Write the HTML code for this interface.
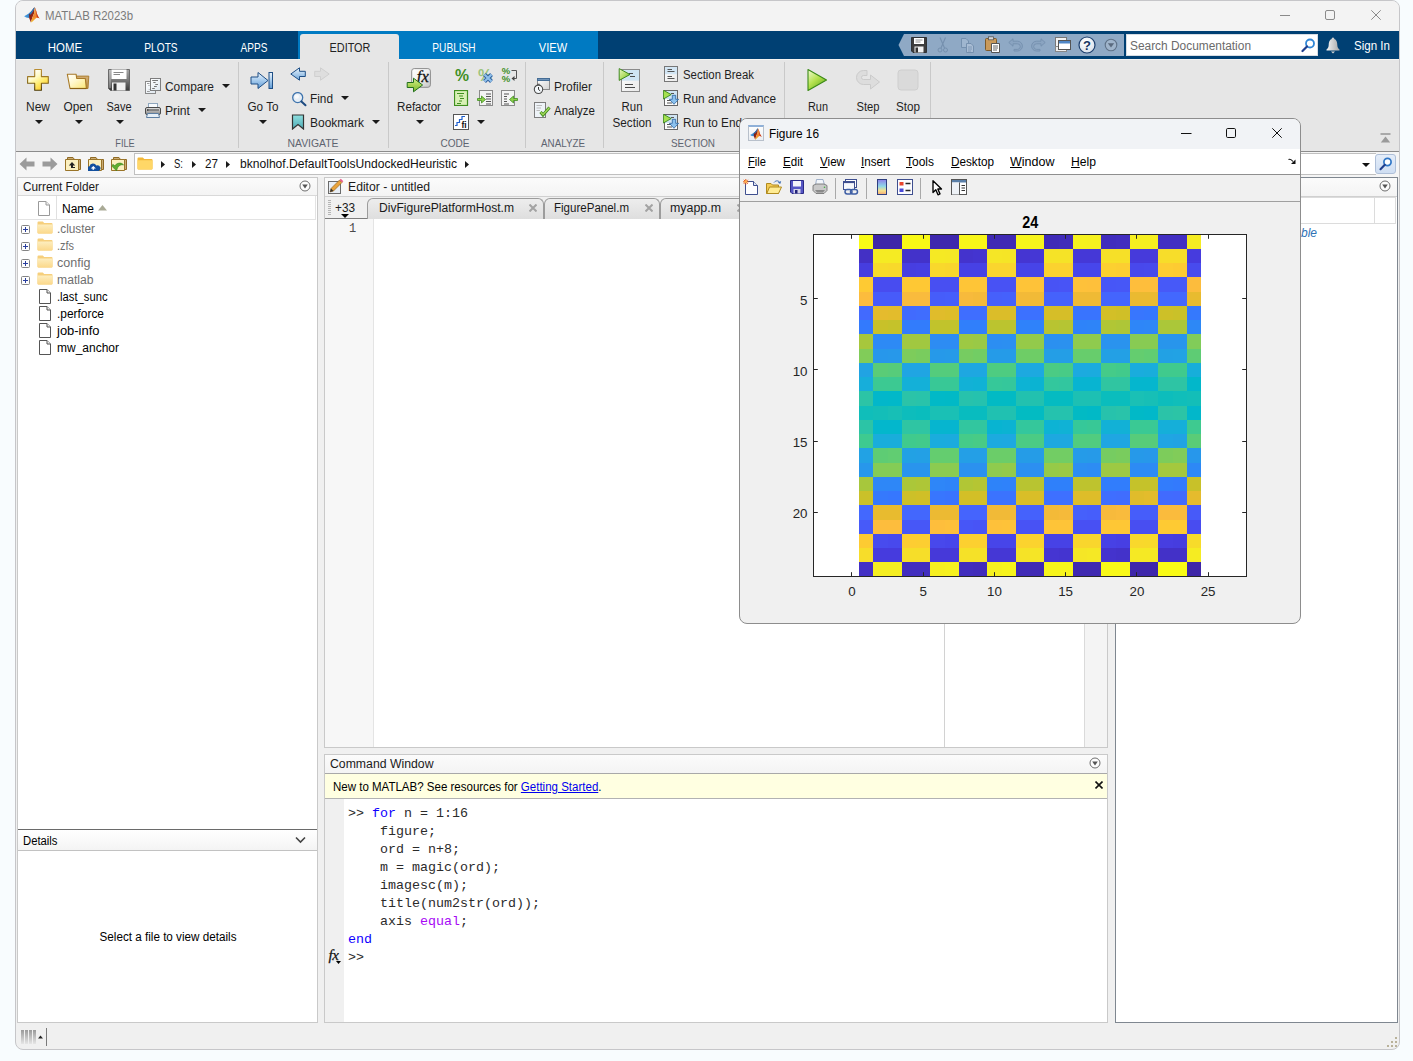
<!DOCTYPE html>
<html><head><meta charset="utf-8"><title>MATLAB R2023b</title>
<style>
html,body{margin:0;padding:0;}
body{width:1413px;height:1061px;overflow:hidden;background:#f8fcfe;font-family:'Liberation Sans', sans-serif;font-size:12px;position:relative;}
div,span,svg{position:absolute;box-sizing:border-box;}
.t{display:block;}
u{text-decoration:underline;text-underline-offset:1px;}
</style></head>
<body>
<div style="left:15px;top:0px;width:1385px;height:1050px;background:#f0f0f0;border:1px solid #c6c6c9;border-radius:8px;"></div>
<div style="left:16px;top:1px;width:1383px;height:30px;background:#f3f3f3;border-radius:7px 7px 0 0;"></div>
<span class="t" id="t0" style="top:7.50px;line-height:16px;font-size:12px;color:#7b7b7b;white-space:pre;left:45px;transform-origin:0 50%;transform:scaleX(0.9514);">MATLAB R2023b</span>
<div style="left:16px;top:31px;width:1383px;height:28px;background:#004073;"></div>
<div style="left:298px;top:31px;width:300px;height:28px;background:#007ac2;"></div>
<div style="left:300px;top:34px;width:99px;height:25px;background:#e6e6e6;border-radius:3px 3px 0 0;"></div>
<span class="t" id="t1" style="top:39.80px;line-height:16px;font-size:12px;color:#fff;white-space:pre;left:64.5px;transform:translateX(-50%) scaleX(0.9528);">HOME</span>
<span class="t" id="t2" style="top:39.80px;line-height:16px;font-size:12px;color:#fff;white-space:pre;left:161px;transform:translateX(-50%) scaleX(0.8461);">PLOTS</span>
<span class="t" id="t3" style="top:39.80px;line-height:16px;font-size:12px;color:#fff;white-space:pre;left:253.5px;transform:translateX(-50%) scaleX(0.8371);">APPS</span>
<span class="t" id="t4" style="top:39.80px;line-height:16px;font-size:12px;color:#222;white-space:pre;left:349.5px;transform:translateX(-50%) scaleX(0.9042);">EDITOR</span>
<span class="t" id="t5" style="top:39.80px;line-height:16px;font-size:12px;color:#fff;white-space:pre;left:454.2px;transform:translateX(-50%) scaleX(0.8431);">PUBLISH</span>
<span class="t" id="t6" style="top:39.80px;line-height:16px;font-size:12px;color:#fff;white-space:pre;left:552.7px;transform:translateX(-50%) scaleX(0.9227);">VIEW</span>
<div style="left:16px;top:59px;width:1383px;height:92px;background:#e6e6e6;"></div>
<div style="left:16px;top:59px;width:1383px;height:1px;background:#f4f2f0;"></div>
<div style="left:300px;top:59px;width:99px;height:1px;background:#e6e6e6;"></div>
<div style="left:16px;top:151px;width:1383px;height:1px;background:#8c8c8c;"></div>
<div style="left:16px;top:152px;width:1383px;height:25px;background:#f5f5f5;"></div>
<div style="left:134px;top:153px;width:1242px;height:22px;background:#fff;border:1px solid #c0c0c0;border-right:none;"></div>
<svg style="left:24px;top:7px;width:16px;height:16px;" viewBox="-0.2 -0.2 16.4 16.4"><defs><linearGradient id="ml24" x1="0" y1="0" x2="1" y2="0"><stop offset="0" stop-color="#4aa3e6"/><stop offset="1" stop-color="#1f5fa8"/></linearGradient><linearGradient id="md24" x1="0" y1="0" x2="1" y2="1"><stop offset="0" stop-color="#5a0f10"/><stop offset="1" stop-color="#c23a1a"/></linearGradient><linearGradient id="mo24" x1="0" y1="0" x2="0" y2="1"><stop offset="0" stop-color="#f2a23a"/><stop offset="0.6" stop-color="#f0832c"/><stop offset="1" stop-color="#f7c62e"/></linearGradient></defs><path d="M-0.1 9.2L5.2 6.2C7.5 4.5 9 1.8 10.5 0L8.5 5.5L5.1 11L2 10.6Z" fill="url(#ml24)"/><path d="M5.1 6.9C7.5 5 9 1.8 10.5 0L10.3 6L8.2 11L6.9 15.8L5.1 11Z" fill="url(#md24)"/><path d="M10.5 0C11.5 1 12.3 4 13.2 7C14 9.3 15 10.8 15.9 11.7C14.3 10.6 13.2 10.6 12.3 11.2C10.5 12.5 8.8 15 6.9 15.8L8.2 11L10.3 6Z" fill="url(#mo24)"/><path d="M10.9 0.4C11.8 1.5 12.4 4 13.2 7C14 9.3 15 10.8 15.9 11.7C14.5 10.7 13.6 10.5 13 10.6C12.6 7 12 3.5 10.9 0.4Z" fill="#c5311d"/><path d="M4.6 6.5C7.2 4.6 8.8 2 10.4 0L10.7 1C9.6 3.2 8.2 5.8 6.6 7.8Z" fill="#2f7fc8" opacity="0.9"/></svg>
<svg style="left:1280px;top:10px;width:10px;height:11px;" viewBox="0 0 10 11"><path d="M0 5.5H10" stroke="#8a8a8a" stroke-width="1"/></svg>
<svg style="left:1325px;top:10px;width:10px;height:10px;" viewBox="0 0 10 10"><rect x="0.5" y="0.5" width="9" height="9" rx="1.5" fill="none" stroke="#8a8a8a"/></svg>
<svg style="left:1371px;top:10px;width:10px;height:10px;" viewBox="0 0 10 10"><path d="M0.3 0.3L9.7 9.7M9.7 0.3L0.3 9.7" stroke="#8a8a8a" stroke-width="1"/></svg>
<svg style="left:898px;top:34px;width:226px;height:22px;" viewBox="0 0 226 22"><path d="M6 0H226V22H6L0.5 11Z" fill="#8fa9c5"/></svg>
<svg style="left:911px;top:37px;width:16px;height:16px;" viewBox="0 0 16 16"><path d="M0.5 0.5H15.5V15.5H2L0.5 14Z" fill="#3c3c3c" stroke="#222" stroke-width="0.8"/><rect x="3" y="1" width="10" height="6" fill="#fff"/><path d="M4.5 3H11.5M4.5 5H9.5" stroke="#777" stroke-width="0.8"/><rect x="3.5" y="9.5" width="9" height="6" fill="#f2f2f2"/><rect x="4.5" y="10.5" width="2.5" height="5" fill="#333"/></svg>
<svg style="left:936px;top:37px;width:14px;height:16px;" viewBox="0 0 14 16"><path d="M9.5 0.5L5 11M4 0.5L8.5 11" stroke="#7590ae" stroke-width="1.1" fill="none"/><circle cx="4" cy="13" r="2" fill="none" stroke="#7590ae"/><circle cx="9.5" cy="13" r="2" fill="none" stroke="#7590ae"/></svg>
<svg style="left:960px;top:37px;width:15px;height:16px;" viewBox="0 0 15 16"><path d="M1.5 1.5H6L8.5 4V10.5H1.5Z" fill="#9fb6cf" stroke="#7590ae"/><path d="M6.5 6.5H11L13.5 9V15.5H6.5Z" fill="#a9bdd4" stroke="#7590ae"/><path d="M8 10H12M8 12H12M8 14H11" stroke="#7590ae" stroke-width="0.8"/></svg>
<svg style="left:985px;top:36px;width:15px;height:17px;" viewBox="0 0 15 17"><rect x="0.5" y="2.5" width="11" height="12" rx="1" fill="#c99a5b" stroke="#7d5a2a"/><rect x="3.5" y="0.8" width="5" height="3" fill="#d9d9d9" stroke="#555" stroke-width="0.8"/><path d="M6.5 7.5H14.5V16.5H6.5Z" fill="#fff" stroke="#555"/><path d="M8 10H13M8 12H13M8 14H12" stroke="#555" stroke-width="0.9"/></svg>
<svg style="left:1008px;top:38px;width:15px;height:14px;" viewBox="0 0 15 14"><path d="M5 0.8L0.8 4.5L5 8.2V5.8H9.5A2.8 2.8 0 0 1 9.5 11.4H6V13H9.5A4.4 4.4 0 0 0 9.5 3.2H5Z" fill="#8aa4c1" stroke="#7590ae" stroke-width="0.9"/></svg>
<svg style="left:1031px;top:38px;width:15px;height:14px;" viewBox="0 0 15 14"><path d="M10 0.8L14.2 4.5L10 8.2V5.8H5.5A2.8 2.8 0 0 0 5.5 11.4H9V13H5.5A4.4 4.4 0 0 1 5.5 3.2H10Z" fill="#8aa4c1" stroke="#7590ae" stroke-width="0.9"/></svg>
<svg style="left:1055px;top:37px;width:16px;height:16px;" viewBox="0 0 16 16"><rect x="0.5" y="0.5" width="11" height="11" fill="#f3f3f3" stroke="#777"/><rect x="0.5" y="9.5" width="11" height="5" fill="#eee" stroke="#888"/><rect x="3.5" y="3.5" width="12" height="9" fill="#fff" stroke="#555"/><rect x="4" y="4" width="11" height="2.5" fill="#4f86c6"/></svg>
<svg style="left:1078px;top:36px;width:18px;height:18px;" viewBox="0 0 18 18"><defs><radialGradient id="gH" cx="0.4" cy="0.3" r="0.8"><stop offset="0" stop-color="#ffffff"/><stop offset="1" stop-color="#d5dde8"/></radialGradient></defs><circle cx="9" cy="9" r="8" fill="url(#gH)" stroke="#1d3f6e" stroke-width="1.2"/><text x="9" y="13.6" font-family="'Liberation Sans',sans-serif" font-weight="bold" font-size="13" text-anchor="middle" fill="#16345f">?</text></svg>
<svg style="left:1104px;top:38px;width:14px;height:14px;" viewBox="0 0 14 14"><circle cx="7" cy="7" r="5.8" fill="#9fb4cb" stroke="#5f7288" stroke-width="1.1"/><path d="M3.8 5.2H10.2L7 9.6Z" fill="#5a6a7e"/></svg>
<div style="left:1126px;top:34px;width:192px;height:22px;background:#fff;border:1px solid #d8dde3;"></div>
<span class="t" id="t7" style="top:37.50px;line-height:16px;font-size:12px;color:#6a6a6a;white-space:pre;left:1130px;transform-origin:0 50%;transform:scaleX(0.9912);">Search Documentation</span>
<svg style="left:1301px;top:38px;width:15px;height:15px;" viewBox="0 0 15 15"><circle cx="9" cy="5.5" r="4" fill="#fff" stroke="#2f86d6" stroke-width="1.8"/><path d="M6 8.5L1.5 13" stroke="#1f3f8f" stroke-width="2.2" stroke-linecap="round"/></svg>
<svg style="left:1326px;top:37px;width:14px;height:17px;" viewBox="0 0 14 17"><defs><linearGradient id="gB" x1="0" y1="0" x2="1" y2="0"><stop offset="0" stop-color="#f4f4f4"/><stop offset="1" stop-color="#a9a9a9"/></linearGradient></defs><path d="M7 0.5C8 0.5 8.3 1.3 8.3 2C10.5 2.8 11.3 5 11.3 8C11.3 10.5 12.3 11.5 13.5 12.5V13.5H0.5V12.5C1.7 11.5 2.7 10.5 2.7 8C2.7 5 3.5 2.8 5.7 2C5.7 1.3 6 0.5 7 0.5Z" fill="url(#gB)"/><path d="M5 14.5H9L7 16.5Z" fill="#d6d6d6"/></svg>
<span class="t" id="t8" style="top:38.00px;line-height:16px;font-size:12px;color:#fff;white-space:pre;left:1354px;transform-origin:0 50%;transform:scaleX(0.9636);">Sign In</span>
<svg style="left:19px;top:157px;width:16px;height:14px;" viewBox="0 0 16 14"><path d="M0.5 7L7.5 0.5V4.5H15.5V9.5H7.5V13.5Z" fill="#9b9b9b"/></svg>
<svg style="left:42px;top:157px;width:16px;height:14px;" viewBox="0 0 16 14"><path d="M15.5 7L8.5 0.5V4.5H0.5V9.5H8.5V13.5Z" fill="#9b9b9b"/></svg>
<svg style="left:65px;top:156px;width:17px;height:15px;" viewBox="0 0 17 15"><path d="M2.5 1.5H8L9.5 3.5H15.5V13.5H2.5Z" fill="#c9ab74" stroke="#8f6a25"/><path d="M0.5 3.5H13.5V14.5H0.5Z" fill="#fbf0c0" stroke="#9a7428"/><path d="M7 6L3.8 9.5H6V12H10V11H8V9.5H10.2Z" fill="#222"/></svg>
<svg style="left:88px;top:156px;width:17px;height:15px;" viewBox="0 0 17 15"><path d="M2.5 1.5H8L9.5 3.5H15.5V13.5H2.5Z" fill="#c9ab74" stroke="#8f6a25"/><path d="M0.5 3.5H13.5V14.5H0.5Z" fill="#fbf0c0" stroke="#9a7428"/><path d="M2 14.8A2.6 2.6 0 0 1 3 10A3.6 3.6 0 0 1 9.8 9.4A2.9 2.9 0 0 1 12.2 14.8Z" fill="#12509f" transform="translate(-1.5,0.2)"/><path d="M6 12.5H4.2L6.8 10L9.4 12.5H7.6V13.8H6Z" fill="#fff" transform="translate(-1.5,0)"/></svg>
<svg style="left:111px;top:156px;width:17px;height:15px;" viewBox="0 0 17 15"><path d="M2.5 1.5H8L9.5 3.5H15.5V13.5H2.5Z" fill="#c9ab74" stroke="#8f6a25"/><path d="M0.5 3.5H13.5V14.5H0.5Z" fill="#fbf0c0" stroke="#9a7428"/><path d="M1 10L5.5 14.5L6.5 11.5C8 9 10 8 12.5 8.5C10.5 6 6 6.2 3.8 9.5L1.8 8Z" fill="#5fae2f" stroke="#2f7f1a" stroke-width="0.6" transform="translate(0,0.3)"/></svg>
<svg style="left:137px;top:157px;width:16px;height:13px;" viewBox="0 0 16 13"><path d="M0.5 1.5Q0.5 0.5 1.5 0.5H5.8L7.3 2H14.5Q15.5 2 15.5 3V11.5Q15.5 12.5 14.5 12.5H1.5Q0.5 12.5 0.5 11.5Z" fill="#f2b83a"/><path d="M0.5 3.3H15.5V11.5Q15.5 12.5 14.5 12.5H1.5Q0.5 12.5 0.5 11.5Z" fill="#ffd767"/></svg>
<svg style="left:161.0px;top:160.5px;width:4px;height:7px;" viewBox="0 0 4 7"><path d="M0 0V7L4 3.5Z" fill="#1a1a1a"/></svg>
<span class="t" id="t9" style="top:156.00px;line-height:16px;font-size:12px;color:#111;white-space:pre;left:174px;transform-origin:0 50%;transform:scaleX(0.7934);">S:</span>
<svg style="left:191.5px;top:160.5px;width:4px;height:7px;" viewBox="0 0 4 7"><path d="M0 0V7L4 3.5Z" fill="#1a1a1a"/></svg>
<span class="t" id="t10" style="top:156.00px;line-height:16px;font-size:12px;color:#111;white-space:pre;left:204.5px;transform-origin:0 50%;transform:scaleX(0.9731);">27</span>
<svg style="left:225.5px;top:160.5px;width:4px;height:7px;" viewBox="0 0 4 7"><path d="M0 0V7L4 3.5Z" fill="#1a1a1a"/></svg>
<span class="t" id="t11" style="top:156.00px;line-height:16px;font-size:12px;color:#111;white-space:pre;left:239.5px;transform-origin:0 50%;transform:scaleX(1.0072);">bknolhof.DefaultToolsUndockedHeuristic</span>
<svg style="left:465.0px;top:160.5px;width:4px;height:7px;" viewBox="0 0 4 7"><path d="M0 0V7L4 3.5Z" fill="#1a1a1a"/></svg>
<svg style="left:1362.0px;top:162.5px;width:8px;height:4px;" viewBox="0 0 8 4"><path d="M0 0H8L4.0 4Z" fill="#111"/></svg>
<div style="left:1375px;top:154px;width:21px;height:20px;background:linear-gradient(#e4edf9,#cfdef2);border:1px solid #aebfd8;border-radius:3px;"></div>
<svg style="left:1379px;top:157px;width:14px;height:14px;" viewBox="0 0 14 14"><circle cx="8.5" cy="5" r="3.6" fill="#fff" stroke="#2f76c6" stroke-width="1.7"/><path d="M5.8 7.8L1.5 12.2" stroke="#1f3f8f" stroke-width="2.1" stroke-linecap="round"/></svg>
<svg style="left:26px;top:68px;width:24px;height:24px;" viewBox="0 0 24 24"><defs><linearGradient id="gNew" x1="0.2" y1="0.1" x2="0.8" y2="1"><stop offset="0" stop-color="#ffffff"/><stop offset="0.3" stop-color="#fffbc8"/><stop offset="0.6" stop-color="#ffec70"/><stop offset="1" stop-color="#ffc61a"/></linearGradient><linearGradient id="gNs" x1="0" y1="0" x2="0" y2="1"><stop offset="0" stop-color="#b98d33"/><stop offset="0.6" stop-color="#8a6a1c"/><stop offset="1" stop-color="#4a390a"/></linearGradient></defs><path d="M8.7 1.5H15.4V8.6H22.3V15.25H15.4V22.2H8.7V15.25H1.6V8.6H8.7Z" fill="url(#gNew)" stroke="url(#gNs)" stroke-width="1.1" stroke-linejoin="round"/></svg>
<span class="t" id="t12" style="top:99.00px;line-height:16px;font-size:12px;color:#1f1f1f;white-space:pre;left:38px;transform:translateX(-50%) scaleX(0.9993);">New</span>
<svg style="left:35.0px;top:120.0px;width:8px;height:4px;" viewBox="0 0 8 4"><path d="M0 0H8L4.0 4Z" fill="#1a1a1a"/></svg>
<svg style="left:66px;top:68px;width:24px;height:24px;" viewBox="0 0 24 24"><defs><linearGradient id="gOp" x1="0" y1="0" x2="0.9" y2="1"><stop offset="0" stop-color="#ffffff"/><stop offset="0.45" stop-color="#fff8cf"/><stop offset="1" stop-color="#fbe77a"/></linearGradient><linearGradient id="gOb" x1="0" y1="0" x2="0" y2="1"><stop offset="0" stop-color="#d2ad74"/><stop offset="1" stop-color="#b98d45"/></linearGradient></defs><path d="M10.1 8.1H22.8L22 20.5H20L19.3 10.5H10.7Z" fill="url(#gOb)" stroke="#a87a28" stroke-width="0.9" stroke-linejoin="round"/><path d="M1.3 6.2H10.1L10.7 10.5H19.3L20.4 20.5H4Z" fill="url(#gOp)" stroke="#a87a28" stroke-width="1.1" stroke-linejoin="round"/><path d="M4 20.5H20.4" stroke="#8a6214" stroke-width="1.2"/></svg>
<span class="t" id="t13" style="top:99.00px;line-height:16px;font-size:12px;color:#1f1f1f;white-space:pre;left:78px;transform:translateX(-50%) scaleX(0.9878);">Open</span>
<svg style="left:75.0px;top:120.0px;width:8px;height:4px;" viewBox="0 0 8 4"><path d="M0 0H8L4.0 4Z" fill="#1a1a1a"/></svg>
<svg style="left:107px;top:68px;width:24px;height:24px;" viewBox="0 0 24 24"><defs><linearGradient id="gSv" x1="0" y1="0" x2="0" y2="1"><stop offset="0" stop-color="#a6a6a6"/><stop offset="0.5" stop-color="#7a7a7a"/><stop offset="1" stop-color="#3a3a3a"/></linearGradient></defs><path d="M1.5 1.5H22.5V22.5H3.5L1.5 20.5Z" fill="url(#gSv)" stroke="#555" stroke-width="0.8"/><rect x="2" y="2" width="2" height="18" fill="#fff" opacity="0.25"/><rect x="4.5" y="1.5" width="15" height="9.5" fill="#fff"/><path d="M6.5 4.5H16.5M6.5 6.5H13" stroke="#888" stroke-width="1"/><rect x="5" y="14.5" width="13.5" height="8" fill="#f1f1f1"/><rect x="6.5" y="15.5" width="3" height="7" fill="#333"/></svg>
<span class="t" id="t14" style="top:99.00px;line-height:16px;font-size:12px;color:#1f1f1f;white-space:pre;left:119px;transform:translateX(-50%) scaleX(0.9138);">Save</span>
<svg style="left:116.0px;top:120.0px;width:8px;height:4px;" viewBox="0 0 8 4"><path d="M0 0H8L4.0 4Z" fill="#1a1a1a"/></svg>
<svg style="left:145px;top:78px;width:16px;height:16px;" viewBox="0 0 16 16"><defs><linearGradient id="gCp" x1="0" y1="0" x2="1" y2="1"><stop offset="0" stop-color="#ffffff"/><stop offset="1" stop-color="#dfe8f0"/></linearGradient></defs><rect x="0.5" y="3.5" width="10" height="12" fill="url(#gCp)" stroke="#8a8a8a"/><path d="M2 5.5H4.5M3.5 7.5H4.5M3.8 11.5H4.5M2 13.5H4.8" stroke="#9a9a9a"/><rect x="5.5" y="0.5" width="10" height="12" fill="url(#gCp)" stroke="#7d7d7d"/><path d="M7.2 2.5H13M8.3 4.5H10.6M10.3 6.5H13M9 8.5H11.8M7.2 10.5H9.8" stroke="#777"/></svg>
<span class="t" id="t15" style="top:79.00px;line-height:16px;font-size:12px;color:#1f1f1f;white-space:pre;left:165px;transform-origin:0 50%;transform:scaleX(0.9927);">Compare</span>
<svg style="left:222.0px;top:84.0px;width:8px;height:4px;" viewBox="0 0 8 4"><path d="M0 0H8L4.0 4Z" fill="#1a1a1a"/></svg>
<svg style="left:145px;top:102px;width:16px;height:16px;" viewBox="0 0 16 16"><defs><linearGradient id="gPr" x1="0" y1="0" x2="0" y2="1"><stop offset="0" stop-color="#e2e2e2"/><stop offset="0.5" stop-color="#b4b4b4"/><stop offset="1" stop-color="#8a8a8a"/></linearGradient></defs><rect x="3.5" y="1.5" width="9" height="5" fill="#f7fafd" stroke="#8fa6bd"/><rect x="0.5" y="5.5" width="15" height="7" rx="1.5" fill="url(#gPr)" stroke="#4a4a4a"/><rect x="2" y="7.2" width="12" height="1.6" fill="#777"/><circle cx="2.8" cy="8" r="0.7" fill="#222"/><path d="M2.5 11.5H13.5L14.5 15.5H1.5Z" fill="#e6eff7" stroke="#5d7fa3"/></svg>
<span class="t" id="t16" style="top:102.50px;line-height:16px;font-size:12px;color:#1f1f1f;white-space:pre;left:165px;transform-origin:0 50%;transform:scaleX(1.0127);">Print</span>
<svg style="left:198.0px;top:108.0px;width:8px;height:4px;" viewBox="0 0 8 4"><path d="M0 0H8L4.0 4Z" fill="#1a1a1a"/></svg>
<span class="t" id="t17" style="top:135.30px;line-height:16px;font-size:11.5px;color:#5e6470;white-space:pre;left:125px;transform:translateX(-50%) scaleX(0.8026);">FILE</span>
<div style="left:238px;top:62px;width:1px;height:86px;background:#c9c9c9;"></div>
<svg style="left:250px;top:70px;width:24px;height:20px;" viewBox="0 0 24 20"><defs><linearGradient id="gGo" x1="0" y1="0" x2="0" y2="1"><stop offset="0" stop-color="#eef6fd"/><stop offset="0.5" stop-color="#a6cbed"/><stop offset="1" stop-color="#5f9ad4"/></linearGradient></defs><path d="M1 7H8V2.5L18 10.5L8 18.5V14H1Z" fill="url(#gGo)" stroke="#1f4f86" stroke-width="1"/><rect x="19" y="2.5" width="3.5" height="16" fill="url(#gGo)" stroke="#1f4f86" stroke-width="1"/></svg>
<span class="t" id="t18" style="top:99.00px;line-height:16px;font-size:12px;color:#1f1f1f;white-space:pre;left:262.5px;transform:translateX(-50%) scaleX(0.9745);">Go To</span>
<svg style="left:259.0px;top:120.0px;width:8px;height:4px;" viewBox="0 0 8 4"><path d="M0 0H8L4.0 4Z" fill="#1a1a1a"/></svg>
<svg style="left:290px;top:67px;width:16px;height:14px;" viewBox="0 0 16 14"><defs><linearGradient id="gBk" x1="0" y1="0" x2="0" y2="1"><stop offset="0" stop-color="#eaf4fc"/><stop offset="1" stop-color="#6ea6da"/></linearGradient></defs><path d="M0.8 7L9.5 0.8V4.3H15.3V9.5H9.5V13.2Z" fill="url(#gBk)" stroke="#1f4f86" stroke-width="1"/></svg>
<svg style="left:314px;top:67px;width:16px;height:14px;" viewBox="0 0 16 14"><path d="M15.2 7L6.5 0.8V4.3H0.7V9.5H6.5V13.2Z" fill="#dedede" stroke="#cfcfcf" stroke-width="1"/></svg>
<svg style="left:291px;top:92px;width:16px;height:15px;" viewBox="0 0 16 15"><circle cx="6.7" cy="5.6" r="5" fill="#e6eef6" stroke="#3f74ad" stroke-width="1.3"/><circle cx="5.8" cy="4.6" r="2.2" fill="#fff" opacity="0.7"/><path d="M10.4 9.4L14.5 13.2" stroke="#1c4a80" stroke-width="2" stroke-linecap="round"/></svg>
<span class="t" id="t19" style="top:90.50px;line-height:16px;font-size:12px;color:#1f1f1f;white-space:pre;left:310px;transform-origin:0 50%;transform:scaleX(0.9853);">Find</span>
<svg style="left:341.0px;top:96.0px;width:8px;height:4px;" viewBox="0 0 8 4"><path d="M0 0H8L4.0 4Z" fill="#1a1a1a"/></svg>
<svg style="left:291px;top:114px;width:14px;height:16px;" viewBox="0 0 14 16"><defs><linearGradient id="gBm" x1="0" y1="0" x2="0" y2="1"><stop offset="0" stop-color="#8fe0e0"/><stop offset="1" stop-color="#4faab4"/></linearGradient></defs><path d="M1.5 1H12.5V15L7 10.5L1.5 15Z" fill="url(#gBm)" stroke="#333" stroke-width="1.2"/></svg>
<span class="t" id="t20" style="top:115.00px;line-height:16px;font-size:12px;color:#1f1f1f;white-space:pre;left:310px;transform-origin:0 50%;transform:scaleX(0.9994);">Bookmark</span>
<svg style="left:372.0px;top:120.0px;width:8px;height:4px;" viewBox="0 0 8 4"><path d="M0 0H8L4.0 4Z" fill="#1a1a1a"/></svg>
<span class="t" id="t21" style="top:135.30px;line-height:16px;font-size:11.5px;color:#5e6470;white-space:pre;left:312.5px;transform:translateX(-50%) scaleX(0.9034);">NAVIGATE</span>
<div style="left:388px;top:62px;width:1px;height:86px;background:#c9c9c9;"></div>
<svg style="left:406px;top:67px;width:26px;height:26px;" viewBox="0 0 26 26"><defs><linearGradient id="gRf" x1="0" y1="0" x2="1" y2="1"><stop offset="0" stop-color="#ffffff"/><stop offset="0.5" stop-color="#f0f0f0"/><stop offset="1" stop-color="#c4c4c4"/></linearGradient><linearGradient id="gGr" x1="0" y1="0" x2="0" y2="1"><stop offset="0" stop-color="#d6ef90"/><stop offset="0.5" stop-color="#a9d556"/><stop offset="1" stop-color="#79b431"/></linearGradient></defs><rect x="5.7" y="1.6" width="18.7" height="18.7" rx="2.5" fill="url(#gRf)" stroke="#8c8c8c"/><text x="16.8" y="15.2" font-family="'Liberation Serif',serif" font-style="italic" font-size="16.5" text-anchor="middle" fill="#111" stroke="#111" stroke-width="0.3">fx</text><path d="M1.2 15.5H7.5V11.2L16.6 18L7.5 24.8V20.5H1.2Z" fill="url(#gGr)" stroke="#22701c" stroke-width="1" stroke-linejoin="round"/></svg>
<span class="t" id="t22" style="top:99.00px;line-height:16px;font-size:12px;color:#1f1f1f;white-space:pre;left:419px;transform:translateX(-50%) scaleX(0.9700);">Refactor</span>
<svg style="left:416.0px;top:120.0px;width:8px;height:4px;" viewBox="0 0 8 4"><path d="M0 0H8L4.0 4Z" fill="#1a1a1a"/></svg>
<svg style="left:454px;top:67px;width:16px;height:16px;" viewBox="0 0 16 16"><text x="8" y="13.6" font-family="'Liberation Sans',sans-serif" font-weight="bold" font-size="17" textLength="14" lengthAdjust="spacingAndGlyphs" text-anchor="middle" fill="#3f8f1f">%</text></svg>
<svg style="left:477px;top:67px;width:16px;height:16px;" viewBox="0 0 16 16"><text x="8" y="13.6" font-family="'Liberation Sans',sans-serif" font-weight="bold" font-size="17" textLength="14" lengthAdjust="spacingAndGlyphs" text-anchor="middle" fill="#9cc47c">%</text><path d="M7.5 7.5L14.5 14.5M14.5 7.5L7.5 14.5" stroke="#2f5f9f" stroke-width="4"/><path d="M7.5 7.5L14.5 14.5M14.5 7.5L7.5 14.5" stroke="#8fc0ea" stroke-width="2.2"/></svg>
<svg style="left:501px;top:67px;width:17px;height:16px;" viewBox="0 0 17 16"><text x="5" y="7.2" font-family="'Liberation Sans',sans-serif" font-weight="bold" font-size="9.5" text-anchor="middle" fill="#3f8f1f">%</text><text x="5" y="14.8" font-family="'Liberation Sans',sans-serif" font-weight="bold" font-size="9.5" text-anchor="middle" fill="#3f8f1f">%</text><path d="M10.5 3.5H15.5V11.5H12" stroke="#555" fill="none"/><path d="M13.5 9L10.5 11.5L13.5 14Z" fill="#444"/></svg>
<svg style="left:454px;top:90px;width:15px;height:16px;" viewBox="0 0 15 16"><rect x="0.5" y="0.5" width="13" height="15" fill="#d9f0b6" stroke="#3f8f1f" stroke-width="1.2"/><path d="M3 3.5H10M5 6H9M6 8.5H10M5 11H8M3 13.5H7" stroke="#3f8f1f"/></svg>
<svg style="left:477px;top:90px;width:16px;height:16px;" viewBox="0 0 16 16"><rect x="2.5" y="0.5" width="13" height="15" fill="#f4f4f4" stroke="#8a8a8a"/><path d="M9 4H14M9 6.5H14M9 9H14M9 11.5H14M9 14H14" stroke="#555"/><path d="M0.5 8.5H4.5V6L8.5 9.5L4.5 13V10.5H0.5Z" fill="#8fd04a" stroke="#3f8f1f" stroke-width="0.8"/></svg>
<svg style="left:501px;top:90px;width:17px;height:16px;" viewBox="0 0 17 16"><rect x="0.5" y="0.5" width="13" height="15" fill="#f4f4f4" stroke="#8a8a8a"/><path d="M3 4H8M3 6.5H6M3 9H6M3 11.5H6M3 14H8" stroke="#555"/><path d="M16.5 8.5H12.5V6L8.5 9.5L12.5 13V10.5H16.5Z" fill="#8fd04a" stroke="#3f8f1f" stroke-width="0.8"/></svg>
<svg style="left:453px;top:114px;width:16px;height:16px;" viewBox="0 0 16 16"><rect x="0.5" y="0.5" width="15" height="15" fill="#fff" stroke="#555"/><path d="M2 11.5H4V8.5H6.5V5.5H9V2.5H12" stroke="#1f5fcf" stroke-width="1.2" fill="none"/><text x="11" y="14" font-family="'Liberation Sans',sans-serif" font-weight="bold" font-size="8.5" text-anchor="middle" fill="#111">fi</text></svg>
<svg style="left:477.0px;top:120.0px;width:8px;height:4px;" viewBox="0 0 8 4"><path d="M0 0H8L4.0 4Z" fill="#1a1a1a"/></svg>
<span class="t" id="t23" style="top:135.30px;line-height:16px;font-size:11.5px;color:#5e6470;white-space:pre;left:455px;transform:translateX(-50%) scaleX(0.8726);">CODE</span>
<div style="left:525px;top:62px;width:1px;height:86px;background:#c9c9c9;"></div>
<svg style="left:533px;top:77px;width:17px;height:18px;" viewBox="0 0 17 18"><defs><linearGradient id="gWn" x1="0" y1="0" x2="1" y2="1"><stop offset="0" stop-color="#ffffff"/><stop offset="1" stop-color="#d2d2d2"/></linearGradient></defs><rect x="4.5" y="1.5" width="12" height="11" fill="url(#gWn)" stroke="#8a8a8a"/><rect x="4.5" y="1.5" width="12" height="2" fill="#6f93b8" stroke="#456d95"/><circle cx="5.5" cy="12.3" r="4.2" fill="#f4f8fb" stroke="#4a4a4a" stroke-width="1.1"/><path d="M5.5 10V12.5L7.2 13.8" stroke="#333" fill="none"/><path d="M4.3 7.2H6.7M2 9L2.8 9.8" stroke="#4a4a4a" stroke-width="1.1"/></svg>
<span class="t" id="t24" style="top:79.00px;line-height:16px;font-size:12px;color:#1f1f1f;white-space:pre;left:554px;transform-origin:0 50%;transform:scaleX(0.9996);">Profiler</span>
<svg style="left:534px;top:102px;width:17px;height:16px;" viewBox="0 0 17 16"><rect x="0.5" y="0.5" width="11" height="15" fill="#eef3f8" stroke="#7d7d7d"/><path d="M2.5 3.5H8M2.5 6H7M2.5 8.5H6" stroke="#bbb"/><path d="M6.5 10L9 13L15.5 5.5" stroke="#3d8a1c" stroke-width="3" fill="none"/><path d="M6.7 10.2L9 12.8L15.3 5.7" stroke="#a4d95a" stroke-width="1.3" fill="none"/></svg>
<span class="t" id="t25" style="top:102.80px;line-height:16px;font-size:12px;color:#1f1f1f;white-space:pre;left:554px;transform-origin:0 50%;transform:scaleX(0.9601);">Analyze</span>
<span class="t" id="t26" style="top:135.30px;line-height:16px;font-size:11.5px;color:#5e6470;white-space:pre;left:563px;transform:translateX(-50%) scaleX(0.8533);">ANALYZE</span>
<div style="left:603px;top:62px;width:1px;height:86px;background:#c9c9c9;"></div>
<svg style="left:618px;top:68px;width:24px;height:25px;" viewBox="0 0 24 25"><defs><linearGradient id="gTr" x1="0" y1="0" x2="1" y2="1"><stop offset="0" stop-color="#eaf8c4"/><stop offset="0.5" stop-color="#b4df6a"/><stop offset="1" stop-color="#5fae1f"/></linearGradient><linearGradient id="gPg" x1="0" y1="0" x2="1" y2="1"><stop offset="0" stop-color="#ffffff"/><stop offset="1" stop-color="#e9e9e9"/></linearGradient></defs><rect x="3.5" y="1.5" width="18" height="22" fill="url(#gPg)" stroke="#8a8a8a"/><rect x="4" y="2" width="17" height="10.7" fill="#cfe4f3"/><path d="M11 5.5H15M12 8.5H17M7 16.5H15M7 19.5H17" stroke="#4a4a4a"/><path d="M1.2 0.6V12.4L12 6.5Z" fill="url(#gTr)" stroke="#2f7f12" stroke-width="0.9" stroke-linejoin="round"/></svg>
<span class="t" id="t27" style="top:99.00px;line-height:16px;font-size:12px;color:#1f1f1f;white-space:pre;left:631.5px;transform:translateX(-50%) scaleX(0.9539);">Run</span>
<span class="t" id="t28" style="top:115.00px;line-height:16px;font-size:12px;color:#1f1f1f;white-space:pre;left:631.5px;transform:translateX(-50%) scaleX(0.9742);">Section</span>
<svg style="left:663px;top:66px;width:16px;height:16px;" viewBox="0 0 16 16"><rect x="1.5" y="0.5" width="13" height="15" fill="url(#gPg)" stroke="#777"/><rect x="2" y="1" width="12" height="7.2" fill="#d3e6f4"/><path d="M4.5 3.5H9M4.5 5.5H11.5M4.5 10.5H9M4.5 12.5H11.5" stroke="#555"/></svg>
<span class="t" id="t29" style="top:67.00px;line-height:16px;font-size:12px;color:#1f1f1f;white-space:pre;left:683px;transform-origin:0 50%;transform:scaleX(0.9502);">Section Break</span>
<svg style="left:663px;top:90px;width:17px;height:16px;" viewBox="0 0 17 16"><rect x="1.5" y="0.5" width="13" height="15" fill="#fdfdfd" stroke="#666"/><rect x="2" y="1" width="12" height="8" fill="#cfe4f3"/><path d="M8 3.5H11M4 10.5H8M4 13H9" stroke="#555"/><path d="M0.4 0.2V9L8.2 4.6Z" fill="#a5e050" stroke="#2a7a10" stroke-width="0.8" stroke-linejoin="round"/><path d="M9.3 5.3H12.7V9.3H15.6L11 14.3L6.4 9.3H9.3Z" fill="#8cc2ee" stroke="#2a62a0" stroke-width="0.8" stroke-linejoin="round"/></svg>
<span class="t" id="t30" style="top:91.00px;line-height:16px;font-size:12px;color:#1f1f1f;white-space:pre;left:683px;transform-origin:0 50%;transform:scaleX(0.9815);">Run and Advance</span>
<svg style="left:663px;top:114px;width:17px;height:16px;" viewBox="0 0 17 16"><rect x="1.5" y="0.5" width="13" height="15" fill="#fdfdfd" stroke="#666"/><rect x="2" y="1" width="12" height="8" fill="#cfe4f3"/><path d="M8 3.5H11M4 10.5H8M4 13H9" stroke="#555"/><path d="M0.4 0.2V9L8.2 4.6Z" fill="#a5e050" stroke="#2a7a10" stroke-width="0.8" stroke-linejoin="round"/><path d="M9.3 5.3H12.7V9.3H15.6L11 14.3L6.4 9.3H9.3Z" fill="#8cc2ee" stroke="#2a62a0" stroke-width="0.8" stroke-linejoin="round"/></svg>
<span class="t" id="t31" style="top:115.00px;line-height:16px;font-size:12px;color:#1f1f1f;white-space:pre;left:683px;transform-origin:0 50%;transform:scaleX(0.9826);">Run to End</span>
<span class="t" id="t32" style="top:135.30px;line-height:16px;font-size:11.5px;color:#5e6470;white-space:pre;left:692.5px;transform:translateX(-50%) scaleX(0.8606);">SECTION</span>
<div style="left:784px;top:62px;width:1px;height:86px;background:#c9c9c9;"></div>
<svg style="left:806px;top:68px;width:24px;height:24px;" viewBox="0 0 24 24"><defs><linearGradient id="gRn" x1="0" y1="0" x2="0.8" y2="1"><stop offset="0" stop-color="#f2fbd8"/><stop offset="0.5" stop-color="#b5e24f"/><stop offset="1" stop-color="#5ea81c"/></linearGradient></defs><path d="M2 1.5V22.5L20.5 12Z" fill="url(#gRn)" stroke="#3b8a16" stroke-width="1.1" stroke-linejoin="round"/></svg>
<span class="t" id="t33" style="top:99.00px;line-height:16px;font-size:12px;color:#1f1f1f;white-space:pre;left:817.5px;transform:translateX(-50%) scaleX(0.9084);">Run</span>
<svg style="left:855px;top:69px;width:26px;height:22px;" viewBox="0 0 26 22"><path d="M12 1.5H8.5A7 7 0 0 0 8.5 15.5H15.5V20L24.5 13L15.5 6V10.5H8.5A2 2 0 0 1 8.5 6.5H12Z" fill="#dddddd" stroke="#cbcbcb" stroke-width="1" stroke-linejoin="round"/></svg>
<span class="t" id="t34" style="top:99.00px;line-height:16px;font-size:12px;color:#1f1f1f;white-space:pre;left:867.5px;transform:translateX(-50%) scaleX(0.9316);">Step</span>
<svg style="left:897px;top:69px;width:22px;height:22px;" viewBox="0 0 22 22"><rect x="1" y="1" width="20" height="20" rx="3" fill="#dadada" stroke="#cecece"/></svg>
<span class="t" id="t35" style="top:99.00px;line-height:16px;font-size:12px;color:#1f1f1f;white-space:pre;left:908px;transform:translateX(-50%) scaleX(0.9722);">Stop</span>
<div style="left:930px;top:62px;width:1px;height:86px;background:#c9c9c9;"></div>
<svg style="left:1380px;top:133px;width:11px;height:10px;" viewBox="0 0 11 10"><path d="M0.5 1H10.5" stroke="#9a9a9a" stroke-width="1.6"/><path d="M0.8 9.5H10.2L5.5 3.5Z" fill="#9a9a9a"/></svg>
<div style="left:17px;top:177px;width:301px;height:846px;background:#fff;border:1px solid #c9c9c9;"></div>
<div style="left:18px;top:178px;width:299px;height:18px;background:linear-gradient(#fbfbfb,#f4f4f4);border-bottom:1px solid #d9d9d9;"></div>
<span class="t" id="t36" style="top:178.70px;line-height:16px;font-size:12px;color:#1a1a1a;white-space:pre;left:23px;transform-origin:0 50%;transform:scaleX(0.9822);">Current Folder</span>
<svg style="left:299px;top:179.7px;width:12px;height:12px;" viewBox="0 0 12 12"><circle cx="6" cy="6" r="5" fill="#fdfdfd" stroke="#6e6e6e" stroke-width="1"/><path d="M3.2 4.6H8.8L6 8.4Z" fill="#555"/></svg>
<div style="left:18px;top:196px;width:298px;height:24px;background:#fff;border-bottom:1px solid #e3e3e3;border-right:1px solid #e3e3e3;"></div>
<div style="left:56px;top:196px;width:1px;height:23px;background:#e0e0e0;"></div>
<svg style="left:38px;top:201px;width:12px;height:15px;" viewBox="0 0 12 15"><path d="M0.5 0.5H8L11.5 4V14.5H0.5Z" fill="#fff" stroke="#9a9a9a" stroke-width="1"/><path d="M8 0.5V4H11.5" fill="#f0f0f0" stroke="#9a9a9a" stroke-width="1"/></svg>
<span class="t" id="t37" style="top:200.50px;line-height:16px;font-size:12px;color:#000;white-space:pre;left:62px;">Name</span>
<svg style="left:98px;top:205px;width:9px;height:6px;" viewBox="0 0 9 6"><path d="M0 5.5H9L4.5 0Z" fill="#a9aa96"/></svg>
<svg style="left:21.0px;top:225.0px;width:9px;height:9px;" viewBox="0 0 9 9"><rect x="0.5" y="0.5" width="8" height="8" rx="1" fill="#fdfdfd" stroke="#848484"/><path d="M2 4.5H7M4.5 2V7" stroke="#2a3f9e" stroke-width="1"/></svg>
<svg style="left:37px;top:221px;width:16px;height:13px;" viewBox="0 0 16 13"><defs><linearGradient id="fg37221" x1="0" y1="0" x2="0" y2="1"><stop offset="0" stop-color="#fdeec0"/><stop offset="1" stop-color="#fbd88a"/></linearGradient></defs><path d="M0.5 1.5Q0.5 0.5 1.5 0.5H5.8L7.2 2H14.5Q15.5 2 15.5 3V11.5Q15.5 12.5 14.5 12.5H1.5Q0.5 12.5 0.5 11.5Z" fill="#f6cf7c"/><path d="M0.5 3.4H15.5V11.5Q15.5 12.5 14.5 12.5H1.5Q0.5 12.5 0.5 11.5Z" fill="url(#fg37221)"/></svg>
<span class="t" id="t38" style="top:221.00px;line-height:16px;font-size:12px;color:#6f6f6f;white-space:pre;left:57px;transform-origin:0 50%;transform:scaleX(0.9822);">.cluster</span>
<svg style="left:21.0px;top:242.0px;width:9px;height:9px;" viewBox="0 0 9 9"><rect x="0.5" y="0.5" width="8" height="8" rx="1" fill="#fdfdfd" stroke="#848484"/><path d="M2 4.5H7M4.5 2V7" stroke="#2a3f9e" stroke-width="1"/></svg>
<svg style="left:37px;top:238px;width:16px;height:13px;" viewBox="0 0 16 13"><defs><linearGradient id="fg37238" x1="0" y1="0" x2="0" y2="1"><stop offset="0" stop-color="#fdeec0"/><stop offset="1" stop-color="#fbd88a"/></linearGradient></defs><path d="M0.5 1.5Q0.5 0.5 1.5 0.5H5.8L7.2 2H14.5Q15.5 2 15.5 3V11.5Q15.5 12.5 14.5 12.5H1.5Q0.5 12.5 0.5 11.5Z" fill="#f6cf7c"/><path d="M0.5 3.4H15.5V11.5Q15.5 12.5 14.5 12.5H1.5Q0.5 12.5 0.5 11.5Z" fill="url(#fg37238)"/></svg>
<span class="t" id="t39" style="top:238.00px;line-height:16px;font-size:12px;color:#6f6f6f;white-space:pre;left:57px;transform-origin:0 50%;transform:scaleX(0.9105);">.zfs</span>
<svg style="left:21.0px;top:259.0px;width:9px;height:9px;" viewBox="0 0 9 9"><rect x="0.5" y="0.5" width="8" height="8" rx="1" fill="#fdfdfd" stroke="#848484"/><path d="M2 4.5H7M4.5 2V7" stroke="#2a3f9e" stroke-width="1"/></svg>
<svg style="left:37px;top:255px;width:16px;height:13px;" viewBox="0 0 16 13"><defs><linearGradient id="fg37255" x1="0" y1="0" x2="0" y2="1"><stop offset="0" stop-color="#fdeec0"/><stop offset="1" stop-color="#fbd88a"/></linearGradient></defs><path d="M0.5 1.5Q0.5 0.5 1.5 0.5H5.8L7.2 2H14.5Q15.5 2 15.5 3V11.5Q15.5 12.5 14.5 12.5H1.5Q0.5 12.5 0.5 11.5Z" fill="#f6cf7c"/><path d="M0.5 3.4H15.5V11.5Q15.5 12.5 14.5 12.5H1.5Q0.5 12.5 0.5 11.5Z" fill="url(#fg37255)"/></svg>
<span class="t" id="t40" style="top:255.00px;line-height:16px;font-size:12px;color:#6f6f6f;white-space:pre;left:57px;transform-origin:0 50%;transform:scaleX(1.0459);">config</span>
<svg style="left:21.0px;top:276.0px;width:9px;height:9px;" viewBox="0 0 9 9"><rect x="0.5" y="0.5" width="8" height="8" rx="1" fill="#fdfdfd" stroke="#848484"/><path d="M2 4.5H7M4.5 2V7" stroke="#2a3f9e" stroke-width="1"/></svg>
<svg style="left:37px;top:272px;width:16px;height:13px;" viewBox="0 0 16 13"><defs><linearGradient id="fg37272" x1="0" y1="0" x2="0" y2="1"><stop offset="0" stop-color="#fdeec0"/><stop offset="1" stop-color="#fbd88a"/></linearGradient></defs><path d="M0.5 1.5Q0.5 0.5 1.5 0.5H5.8L7.2 2H14.5Q15.5 2 15.5 3V11.5Q15.5 12.5 14.5 12.5H1.5Q0.5 12.5 0.5 11.5Z" fill="#f6cf7c"/><path d="M0.5 3.4H15.5V11.5Q15.5 12.5 14.5 12.5H1.5Q0.5 12.5 0.5 11.5Z" fill="url(#fg37272)"/></svg>
<span class="t" id="t41" style="top:272.00px;line-height:16px;font-size:12px;color:#6f6f6f;white-space:pre;left:57px;transform-origin:0 50%;transform:scaleX(1.0130);">matlab</span>
<svg style="left:39px;top:289px;width:12px;height:15px;" viewBox="0 0 12 15"><path d="M0.5 0.5H8L11.5 4V14.5H0.5Z" fill="#fff" stroke="#555" stroke-width="1"/><path d="M8 0.5V4H11.5" fill="#f0f0f0" stroke="#555" stroke-width="1"/></svg>
<span class="t" id="t42" style="top:289.00px;line-height:16px;font-size:12px;color:#000;white-space:pre;left:57px;transform-origin:0 50%;transform:scaleX(0.9346);">.last_sunc</span>
<svg style="left:39px;top:306px;width:12px;height:15px;" viewBox="0 0 12 15"><path d="M0.5 0.5H8L11.5 4V14.5H0.5Z" fill="#fff" stroke="#555" stroke-width="1"/><path d="M8 0.5V4H11.5" fill="#f0f0f0" stroke="#555" stroke-width="1"/></svg>
<span class="t" id="t43" style="top:306.00px;line-height:16px;font-size:12px;color:#000;white-space:pre;left:57px;transform-origin:0 50%;transform:scaleX(0.9924);">.perforce</span>
<svg style="left:39px;top:323px;width:12px;height:15px;" viewBox="0 0 12 15"><path d="M0.5 0.5H8L11.5 4V14.5H0.5Z" fill="#fff" stroke="#555" stroke-width="1"/><path d="M8 0.5V4H11.5" fill="#f0f0f0" stroke="#555" stroke-width="1"/></svg>
<span class="t" id="t44" style="top:323.00px;line-height:16px;font-size:12px;color:#000;white-space:pre;left:57px;transform-origin:0 50%;transform:scaleX(1.0798);">job-info</span>
<svg style="left:39px;top:340px;width:12px;height:15px;" viewBox="0 0 12 15"><path d="M0.5 0.5H8L11.5 4V14.5H0.5Z" fill="#fff" stroke="#555" stroke-width="1"/><path d="M8 0.5V4H11.5" fill="#f0f0f0" stroke="#555" stroke-width="1"/></svg>
<span class="t" id="t45" style="top:340.00px;line-height:16px;font-size:12px;color:#000;white-space:pre;left:57px;transform-origin:0 50%;transform:scaleX(0.9995);">mw_anchor</span>
<div style="left:18px;top:829px;width:299px;height:1px;background:#6a6a6a;"></div>
<div style="left:18px;top:830px;width:299px;height:21px;background:linear-gradient(#ffffff,#f4f4f4);border-bottom:1px solid #c2c2c2;"></div>
<span class="t" id="t46" style="top:832.50px;line-height:16px;font-size:12px;color:#000;white-space:pre;left:22.5px;transform-origin:0 50%;transform:scaleX(0.9404);">Details</span>
<svg style="left:295px;top:836px;width:11px;height:8px;" viewBox="0 0 11 8"><path d="M1 1.5L5.5 6L10 1.5" stroke="#444" stroke-width="1.6" fill="none"/></svg>
<span class="t" id="t47" style="top:929.00px;line-height:16px;font-size:12px;color:#000;white-space:pre;left:167.5px;transform:translateX(-50%) scaleX(0.9734);">Select a file to view details</span>
<div style="left:324px;top:177px;width:784px;height:571px;background:#fff;border:1px solid #c9c9c9;"></div>
<div style="left:325px;top:178px;width:782px;height:19px;background:linear-gradient(#fbfbfb,#f4f4f4);border-bottom:1px solid #d0d0d0;"></div>
<span class="t" id="t48" style="top:178.70px;line-height:16px;font-size:12px;color:#1a1a1a;white-space:pre;left:348px;transform-origin:0 50%;transform:scaleX(1.0159);">Editor - untitled</span>
<svg style="left:326.5px;top:177.5px;width:17px;height:17px;" viewBox="0 0 17 17"><rect x="1.5" y="3.5" width="12" height="12" fill="#e8eef5" stroke="#6b6b6b"/><path d="M3 14L4 10.5L12.5 2L15 4.5L6.5 13Z" fill="#e9a33b" stroke="#8a5a1a" stroke-width="0.6"/><path d="M12.5 2L13.8 0.7L16.3 3.2L15 4.5Z" fill="#e85a8a"/><path d="M3 14L4 10.5L6.5 13Z" fill="#333"/></svg>
<div style="left:325px;top:197px;width:782px;height:21px;background:#f0f0f0;"></div>
<div style="left:325px;top:218px;width:782px;height:1px;background:#7d7d7d;"></div>
<div style="left:328px;top:200px;width:3px;height:1px;background:#b5b5b5;"></div>
<div style="left:328px;top:202px;width:3px;height:1px;background:#b5b5b5;"></div>
<div style="left:328px;top:204px;width:3px;height:1px;background:#b5b5b5;"></div>
<div style="left:328px;top:206px;width:3px;height:1px;background:#b5b5b5;"></div>
<div style="left:328px;top:208px;width:3px;height:1px;background:#b5b5b5;"></div>
<div style="left:328px;top:210px;width:3px;height:1px;background:#b5b5b5;"></div>
<div style="left:328px;top:212px;width:3px;height:1px;background:#b5b5b5;"></div>
<div style="left:328px;top:214px;width:3px;height:1px;background:#b5b5b5;"></div>
<span class="t" id="t49" style="top:199.70px;line-height:16px;font-size:12px;color:#1a1a1a;white-space:pre;left:335px;transform-origin:0 50%;transform:scaleX(0.9823);">+33</span>
<svg style="left:341.0px;top:214.0px;width:8px;height:4px;" viewBox="0 0 8 4"><path d="M0 0H8L4.0 4Z" fill="#000"/></svg>
<div style="left:367px;top:198px;width:177px;height:21px;background:linear-gradient(#ededed,#dedede);border:1px solid #9c9c9c;border-bottom:none;border-radius:6px 6px 0 0;"></div>
<span class="t" id="t50" style="top:199.50px;line-height:16px;font-size:12px;color:#1a1a1a;white-space:pre;left:379px;transform-origin:0 50%;transform:scaleX(1.0072);">DivFigurePlatformHost.m</span>
<svg style="left:529.0px;top:203.5px;width:8px;height:8px;" viewBox="0 0 8 8"><path d="M0.5 0.5L7.5 7.5M7.5 0.5L0.5 7.5" stroke="#a3a3a3" stroke-width="2" fill="none"/></svg>
<div style="left:544px;top:198px;width:116px;height:21px;background:linear-gradient(#ededed,#dedede);border:1px solid #9c9c9c;border-bottom:none;border-radius:6px 6px 0 0;"></div>
<span class="t" id="t51" style="top:199.50px;line-height:16px;font-size:12px;color:#1a1a1a;white-space:pre;left:554px;transform-origin:0 50%;transform:scaleX(0.9610);">FigurePanel.m</span>
<svg style="left:645.0px;top:203.5px;width:8px;height:8px;" viewBox="0 0 8 8"><path d="M0.5 0.5L7.5 7.5M7.5 0.5L0.5 7.5" stroke="#a3a3a3" stroke-width="2" fill="none"/></svg>
<div style="left:660px;top:198px;width:116px;height:21px;background:linear-gradient(#ededed,#dedede);border:1px solid #9c9c9c;border-bottom:none;border-radius:6px 6px 0 0;"></div>
<span class="t" id="t52" style="top:199.50px;line-height:16px;font-size:12px;color:#1a1a1a;white-space:pre;left:670px;transform-origin:0 50%;transform:scaleX(1.0332);">myapp.m</span>
<svg style="left:737.0px;top:203.5px;width:8px;height:8px;" viewBox="0 0 8 8"><path d="M0.5 0.5L7.5 7.5M7.5 0.5L0.5 7.5" stroke="#a3a3a3" stroke-width="2" fill="none"/></svg>
<div style="left:325px;top:219px;width:49px;height:528px;background:#f7f7f7;border-right:1px solid #e4e4e4;"></div>
<span class="t" id="t53" style="top:220.50px;line-height:16px;font-size:12px;color:#4a4a4a;white-space:pre;left:352.5px;transform:translateX(-50%);font-family:'Liberation Mono', monospace;">1</span>
<div style="left:944px;top:219px;width:1px;height:528px;background:#d2d2d2;"></div>
<div style="left:1084px;top:219px;width:23px;height:528px;background:#f4f4f4;border-left:1px solid #dadada;"></div>
<div style="left:324px;top:754px;width:784px;height:269px;background:#fff;border:1px solid #c9c9c9;"></div>
<div style="left:325px;top:755px;width:782px;height:19px;background:linear-gradient(#fbfbfb,#f4f4f4);border-bottom:1px solid #a9a9a9;"></div>
<span class="t" id="t54" style="top:755.70px;line-height:16px;font-size:12px;color:#1a1a1a;white-space:pre;left:330px;transform-origin:0 50%;transform:scaleX(1.0210);">Command Window</span>
<svg style="left:1089px;top:757px;width:12px;height:12px;" viewBox="0 0 12 12"><circle cx="6" cy="6" r="5" fill="#fdfdfd" stroke="#6e6e6e" stroke-width="1"/><path d="M3.2 4.6H8.8L6 8.4Z" fill="#555"/></svg>
<div style="left:325px;top:774px;width:782px;height:25px;background:#ffffe1;border-bottom:1px solid #b2b2b2;"></div>
<span class="t" id="t55" style="top:778.50px;line-height:16px;font-size:12px;color:#000;white-space:pre;left:333px;transform-origin:0 50%;transform:scaleX(0.9592);">New to MATLAB? See resources for <span style="position:static;color:#0000ee;text-decoration:underline">Getting Started</span>.</span>
<svg style="left:1095.0px;top:781.0px;width:8px;height:8px;" viewBox="0 0 8 8"><path d="M0.5 0.5L7.5 7.5M7.5 0.5L0.5 7.5" stroke="#111" stroke-width="1.6" fill="none"/></svg>
<div style="left:325px;top:799px;width:19px;height:223px;background:#f0f0f0;"></div>
<span class="t" id="t56" style="top:806.00px;line-height:16px;font-size:13.333px;color:#2b2b2b;white-space:pre;left:348px;font-family:'Liberation Mono', monospace;">&gt;&gt; <span style="position:static;color:#0e00ff">for</span> n = 1:16</span>
<span class="t" id="t57" style="top:824.00px;line-height:16px;font-size:13.333px;color:#2b2b2b;white-space:pre;left:348px;font-family:'Liberation Mono', monospace;">    figure;</span>
<span class="t" id="t58" style="top:842.00px;line-height:16px;font-size:13.333px;color:#2b2b2b;white-space:pre;left:348px;font-family:'Liberation Mono', monospace;">    ord = n+8;</span>
<span class="t" id="t59" style="top:860.00px;line-height:16px;font-size:13.333px;color:#2b2b2b;white-space:pre;left:348px;font-family:'Liberation Mono', monospace;">    m = magic(ord);</span>
<span class="t" id="t60" style="top:878.00px;line-height:16px;font-size:13.333px;color:#2b2b2b;white-space:pre;left:348px;font-family:'Liberation Mono', monospace;">    imagesc(m);</span>
<span class="t" id="t61" style="top:896.00px;line-height:16px;font-size:13.333px;color:#2b2b2b;white-space:pre;left:348px;font-family:'Liberation Mono', monospace;">    title(num2str(ord));</span>
<span class="t" id="t62" style="top:914.00px;line-height:16px;font-size:13.333px;color:#2b2b2b;white-space:pre;left:348px;font-family:'Liberation Mono', monospace;">    axis <span style="position:static;color:#a709f5">equal</span>;</span>
<span class="t" id="t63" style="top:932.00px;line-height:16px;font-size:13.333px;color:#2b2b2b;white-space:pre;left:348px;font-family:'Liberation Mono', monospace;"><span style="position:static;color:#0e00ff">end</span></span>
<span class="t" id="t64" style="top:950.00px;line-height:16px;font-size:13.333px;color:#2b2b2b;white-space:pre;left:348px;font-family:'Liberation Mono', monospace;">&gt;&gt; </span>
<span class="t" id="t65" style="top:947.30px;line-height:16px;font-size:15px;color:#111;white-space:pre;left:328.5px;font-family:'Liberation Serif',serif;font-style:italic;letter-spacing:-0.3px;-webkit-text-stroke:0.25px #111;">fx</span>
<svg style="left:336.0px;top:961.0px;width:5px;height:3px;" viewBox="0 0 5 3"><path d="M0 0H5L2.5 3Z" fill="#000"/></svg>
<div style="left:1115px;top:177px;width:283px;height:846px;background:#fff;border:1px solid #c9c9c9;"></div>
<div style="left:1116px;top:178px;width:281px;height:19px;background:linear-gradient(#fbfbfb,#f4f4f4);border-bottom:1px solid #d0d0d0;"></div>
<span class="t" id="t66" style="top:178.70px;line-height:16px;font-size:12px;color:#1a1a1a;white-space:pre;left:1121px;">Workspace</span>
<div style="left:1115px;top:177px;width:283px;height:846px;border:1px solid #7f8790;"></div>
<svg style="left:1379px;top:179.7px;width:12px;height:12px;" viewBox="0 0 12 12"><circle cx="6" cy="6" r="5" fill="#fdfdfd" stroke="#6e6e6e" stroke-width="1"/><path d="M3.2 4.6H8.8L6 8.4Z" fill="#555"/></svg>
<div style="left:1117px;top:197px;width:279px;height:27px;background:#fff;border:1px solid #dcdcdc;"></div>
<div style="left:1374px;top:197px;width:1px;height:27px;background:#dcdcdc;"></div>
<span class="t" id="t67" style="top:224.50px;line-height:16px;font-size:12px;color:#2f72b5;white-space:pre;left:1317px;transform-origin:100% 50%;transform:translateX(-100%);font-style:italic;">No variables available</span>
<div style="left:21px;top:1030px;width:3px;height:14px;background:linear-gradient(#9a9a9a,#e6e6e6);"></div>
<div style="left:25px;top:1030px;width:3px;height:14px;background:linear-gradient(#9a9a9a,#e6e6e6);"></div>
<div style="left:29px;top:1030px;width:3px;height:14px;background:linear-gradient(#9a9a9a,#e6e6e6);"></div>
<div style="left:33px;top:1030px;width:3px;height:14px;background:linear-gradient(#9a9a9a,#e6e6e6);"></div>
<svg style="left:37.5px;top:1035px;width:5px;height:4px;" viewBox="0 0 5 4"><path d="M0 3.5H5L2.5 0.5Z" fill="#222"/></svg>
<div style="left:46px;top:1028px;width:1px;height:18px;background:#7a7a7a;"></div>
<div style="left:1395px;top:1037px;width:2px;height:2px;background:#b9b29a;"></div>
<div style="left:1395px;top:1041px;width:2px;height:2px;background:#b9b29a;"></div>
<div style="left:1391px;top:1041px;width:2px;height:2px;background:#b9b29a;"></div>
<div style="left:1395px;top:1045px;width:2px;height:2px;background:#b9b29a;"></div>
<div style="left:1391px;top:1045px;width:2px;height:2px;background:#b9b29a;"></div>
<div style="left:1387px;top:1045px;width:2px;height:2px;background:#b9b29a;"></div>
<div style="left:739px;top:118px;width:562px;height:506px;background:#f0f0f0;border:1px solid #8d8d8d;border-radius:8px;overflow:hidden;"></div>
<div style="left:740px;top:119px;width:560px;height:30px;background:#f1f3f6;border-radius:7px 7px 0 0;"></div>
<span class="t" id="t68" style="top:125.50px;line-height:16px;font-size:12px;color:#000;white-space:pre;left:769px;transform-origin:0 50%;transform:scaleX(0.9861);">Figure 16</span>
<div style="left:740px;top:149px;width:560px;height:25px;background:#fff;"></div>
<div style="left:740px;top:174px;width:560px;height:1px;background:#8f8f8f;"></div>
<div style="left:740px;top:201px;width:560px;height:1px;background:#a0a0a0;"></div>
<span class="t" id="t69" style="top:153.50px;line-height:16px;font-size:12px;color:#000;white-space:pre;left:748.3px;transform-origin:0 50%;transform:scaleX(0.9298);"><u>F</u>ile</span>
<span class="t" id="t70" style="top:153.50px;line-height:16px;font-size:12px;color:#000;white-space:pre;left:783px;transform-origin:0 50%;transform:scaleX(0.9660);"><u>E</u>dit</span>
<span class="t" id="t71" style="top:153.50px;line-height:16px;font-size:12px;color:#000;white-space:pre;left:820px;transform-origin:0 50%;transform:scaleX(0.9685);"><u>V</u>iew</span>
<span class="t" id="t72" style="top:153.50px;line-height:16px;font-size:12px;color:#000;white-space:pre;left:860.5px;transform-origin:0 50%;transform:scaleX(0.9657);"><u>I</u>nsert</span>
<span class="t" id="t73" style="top:153.50px;line-height:16px;font-size:12px;color:#000;white-space:pre;left:906px;transform-origin:0 50%;transform:scaleX(0.9994);"><u>T</u>ools</span>
<span class="t" id="t74" style="top:153.50px;line-height:16px;font-size:12px;color:#000;white-space:pre;left:951px;transform-origin:0 50%;transform:scaleX(0.9766);"><u>D</u>esktop</span>
<span class="t" id="t75" style="top:153.50px;line-height:16px;font-size:12px;color:#000;white-space:pre;left:1009.5px;transform-origin:0 50%;transform:scaleX(1.0425);"><u>W</u>indow</span>
<span class="t" id="t76" style="top:153.50px;line-height:16px;font-size:12px;color:#000;white-space:pre;left:1071px;transform-origin:0 50%;transform:scaleX(1.0127);"><u>H</u>elp</span>
<div style="left:748px;top:125px;width:16px;height:16px;background:linear-gradient(#fdfdfd,#e9edf2);border:1px solid #b8c0cb;border-top:2px solid #8fb0d8;"></div>
<svg style="left:750px;top:128px;width:12px;height:12px;" viewBox="-0.2 -0.2 16.4 16.4"><defs><linearGradient id="ml750" x1="0" y1="0" x2="1" y2="0"><stop offset="0" stop-color="#4aa3e6"/><stop offset="1" stop-color="#1f5fa8"/></linearGradient><linearGradient id="md750" x1="0" y1="0" x2="1" y2="1"><stop offset="0" stop-color="#5a0f10"/><stop offset="1" stop-color="#c23a1a"/></linearGradient><linearGradient id="mo750" x1="0" y1="0" x2="0" y2="1"><stop offset="0" stop-color="#f2a23a"/><stop offset="0.6" stop-color="#f0832c"/><stop offset="1" stop-color="#f7c62e"/></linearGradient></defs><path d="M-0.1 9.2L5.2 6.2C7.5 4.5 9 1.8 10.5 0L8.5 5.5L5.1 11L2 10.6Z" fill="url(#ml750)"/><path d="M5.1 6.9C7.5 5 9 1.8 10.5 0L10.3 6L8.2 11L6.9 15.8L5.1 11Z" fill="url(#md750)"/><path d="M10.5 0C11.5 1 12.3 4 13.2 7C14 9.3 15 10.8 15.9 11.7C14.3 10.6 13.2 10.6 12.3 11.2C10.5 12.5 8.8 15 6.9 15.8L8.2 11L10.3 6Z" fill="url(#mo750)"/><path d="M10.9 0.4C11.8 1.5 12.4 4 13.2 7C14 9.3 15 10.8 15.9 11.7C14.5 10.7 13.6 10.5 13 10.6C12.6 7 12 3.5 10.9 0.4Z" fill="#c5311d"/><path d="M4.6 6.5C7.2 4.6 8.8 2 10.4 0L10.7 1C9.6 3.2 8.2 5.8 6.6 7.8Z" fill="#2f7fc8" opacity="0.9"/></svg>
<svg style="left:1181px;top:128px;width:11px;height:11px;" viewBox="0 0 11 11"><path d="M0 5.5H10.5" stroke="#111" stroke-width="1"/></svg>
<svg style="left:1226px;top:128px;width:10px;height:10px;" viewBox="0 0 10 10"><rect x="0.5" y="0.5" width="9" height="9" rx="1.2" fill="none" stroke="#111"/></svg>
<svg style="left:1272px;top:128px;width:10px;height:10px;" viewBox="0 0 10 10"><path d="M0.3 0.3L9.7 9.7M9.7 0.3L0.3 9.7" stroke="#111" stroke-width="1"/></svg>
<svg style="left:1288px;top:158px;width:8px;height:7px;" viewBox="0 0 8 7"><path d="M0.5 1.5C2 0.8 3.5 1.5 5 3.5" stroke="#111" stroke-width="1.2" fill="none"/><path d="M7.5 1.5V6H3Z" fill="#111"/></svg>
<svg style="left:743px;top:179px;width:16px;height:16px;" viewBox="0 0 16 16"><path d="M2.5 2.5H10.5L14.5 6.5V15.5H2.5Z" fill="#fdfdff" stroke="#3f4f8f"/><path d="M10.5 2.5V6.5H14.5" fill="#dfe6f5" stroke="#3f4f8f"/><path d="M2.8 0V5.6M0 2.8H5.6M0.8 0.8L4.8 4.8M4.8 0.8L0.8 4.8" stroke="#e85a1a" stroke-width="1"/><circle cx="2.8" cy="2.8" r="1.3" fill="#ffb347"/></svg>
<svg style="left:766px;top:179px;width:16px;height:16px;" viewBox="0 0 16 16"><path d="M0.5 4.5H5L6.5 6H12.5V14.5H0.5Z" fill="#f3cb55" stroke="#b08a1e"/><path d="M0.8 14.5L3.5 8H15.5L12.5 14.5Z" fill="#ffec94" stroke="#b08a1e"/><path d="M8 3.5C10 1 13 1.5 14 4" stroke="#3f6fb5" fill="none"/><path d="M15.2 2L14.2 5L11.8 3.5Z" fill="#3f6fb5"/></svg>
<svg style="left:789px;top:179px;width:16px;height:16px;" viewBox="0 0 16 16"><path d="M1.5 1.5H14.5V14.5H3L1.5 13Z" fill="#5656c4" stroke="#2a2a86"/><rect x="4" y="2" width="8" height="5.5" fill="#f4f4fa"/><rect x="4.5" y="10" width="7" height="4.5" fill="#d5d5e8"/><rect x="6" y="11" width="2.5" height="3.5" fill="#23237a"/></svg>
<svg style="left:812px;top:179px;width:16px;height:16px;" viewBox="0 0 16 16"><path d="M4.5 0.5H11L12.5 6H3.5Z" fill="#f2f6fb" stroke="#8aa0bf" stroke-width="0.8"/><path d="M1 6.5L4 5H12L15 6.5V11.5L12 14.5H4L1 11.5Z" fill="#c9c9c9" stroke="#6a6a6a" stroke-width="0.8"/><path d="M3 11L5 13.5H11L13 11Z" fill="#8a8a8a"/><circle cx="12.5" cy="8.3" r="0.8" fill="#3fae3f"/></svg>
<div style="left:835px;top:178px;width:1px;height:21px;background:#a9a9a9;"></div>
<svg style="left:843px;top:179px;width:16px;height:16px;" viewBox="0 0 16 16"><rect x="2.5" y="0.5" width="11" height="8" fill="#fff" stroke="#3f4f8f"/><rect x="0.5" y="2.5" width="11" height="8" fill="#f6f8fc" stroke="#3f4f8f"/><rect x="0.5" y="2.5" width="11" height="1.6" fill="#3f4f8f"/><rect x="2" y="10.5" width="7" height="4.5" rx="2.2" fill="none" stroke="#3f5fa5" stroke-width="1.5"/><rect x="7.5" y="10.5" width="7" height="4.5" rx="2.2" fill="none" stroke="#3f5fa5" stroke-width="1.5"/></svg>
<div style="left:866px;top:178px;width:1px;height:21px;background:#a9a9a9;"></div>
<svg style="left:876px;top:179px;width:12px;height:16px;" viewBox="0 0 12 16"><defs><linearGradient id="gCb" x1="0" y1="0" x2="0" y2="1"><stop offset="0" stop-color="#8f7fe8"/><stop offset="0.45" stop-color="#8fd8e8"/><stop offset="0.75" stop-color="#f8e08a"/><stop offset="1" stop-color="#f0a878"/></linearGradient></defs><rect x="1.5" y="0.5" width="9" height="15" fill="url(#gCb)" stroke="#2f3f7f"/></svg>
<svg style="left:897px;top:179px;width:16px;height:16px;" viewBox="0 0 16 16"><rect x="0.5" y="0.5" width="15" height="15" fill="#fcfcff" stroke="#3f4f8f"/><rect x="2.5" y="3" width="4" height="3.5" fill="#e8452f"/><rect x="2.5" y="9.5" width="4" height="3.5" fill="#4a4ad8"/><path d="M8.5 4.5H13.5M8.5 11.5H13.5" stroke="#222" stroke-width="1.3"/></svg>
<div style="left:920px;top:178px;width:1px;height:21px;background:#a9a9a9;"></div>
<svg style="left:932px;top:180px;width:11px;height:16px;" viewBox="0 0 11 16"><path d="M1 0.8V12.5L3.8 9.8L6 14.8L8 13.9L5.8 9H9.5Z" fill="#fff" stroke="#000" stroke-width="1.35" stroke-linejoin="round"/></svg>
<svg style="left:951px;top:179px;width:16px;height:16px;" viewBox="0 0 16 16"><rect x="0.5" y="0.5" width="15" height="15" fill="#fff" stroke="#555"/><rect x="1" y="1" width="14" height="2.5" fill="#5a7fa8"/><path d="M8.5 3.5V15.5" stroke="#555"/><path d="M10.5 6.5H14M10.5 9H14M10.5 11.5H14" stroke="#333"/><rect x="1" y="3.5" width="7" height="12" fill="#eef2f7"/></svg>
<svg style="left:740px;top:202px;width:560px;height:421px" viewBox="740 202 560 421">
<rect x="813.5" y="234.5" width="433.0" height="342.0" fill="#fff"/>
<g shape-rendering="crispEdges">
<rect x="859.00" y="234.50" width="14.55" height="14.55" fill="#f9fb15"/>
<rect x="873.25" y="234.50" width="14.55" height="14.55" fill="#3e26a8"/>
<rect x="887.50" y="234.50" width="14.55" height="14.55" fill="#3e26a8"/>
<rect x="901.75" y="234.50" width="14.55" height="14.55" fill="#f9f916"/>
<rect x="916.00" y="234.50" width="14.55" height="14.55" fill="#f9f916"/>
<rect x="930.25" y="234.50" width="14.55" height="14.55" fill="#3f28ae"/>
<rect x="944.50" y="234.50" width="14.55" height="14.55" fill="#3f28ae"/>
<rect x="958.75" y="234.50" width="14.55" height="14.55" fill="#f8f619"/>
<rect x="973.00" y="234.50" width="14.55" height="14.55" fill="#f8f619"/>
<rect x="987.25" y="234.50" width="14.55" height="14.55" fill="#402ab4"/>
<rect x="1001.50" y="234.50" width="14.55" height="14.55" fill="#402ab4"/>
<rect x="1015.75" y="234.50" width="14.55" height="14.55" fill="#f7f51b"/>
<rect x="1030.00" y="234.50" width="14.55" height="14.55" fill="#f7f41c"/>
<rect x="1044.25" y="234.50" width="14.55" height="14.55" fill="#402bb7"/>
<rect x="1058.50" y="234.50" width="14.55" height="14.55" fill="#412cba"/>
<rect x="1072.75" y="234.50" width="14.55" height="14.55" fill="#f6f21e"/>
<rect x="1087.00" y="234.50" width="14.55" height="14.55" fill="#f6f11f"/>
<rect x="1101.25" y="234.50" width="14.55" height="14.55" fill="#412dbd"/>
<rect x="1115.50" y="234.50" width="14.55" height="14.55" fill="#422ebf"/>
<rect x="1129.75" y="234.50" width="14.55" height="14.55" fill="#f6ef20"/>
<rect x="1144.00" y="234.50" width="14.55" height="14.55" fill="#f6ef20"/>
<rect x="1158.25" y="234.50" width="14.55" height="14.55" fill="#422fc2"/>
<rect x="1172.50" y="234.50" width="14.55" height="14.55" fill="#422fc2"/>
<rect x="1186.75" y="234.50" width="14.55" height="14.55" fill="#f5ec22"/>
<rect x="859.00" y="248.75" width="14.55" height="14.55" fill="#4330c5"/>
<rect x="873.25" y="248.75" width="14.55" height="14.55" fill="#f5eb23"/>
<rect x="887.50" y="248.75" width="14.55" height="14.55" fill="#f5eb23"/>
<rect x="901.75" y="248.75" width="14.55" height="14.55" fill="#4332ca"/>
<rect x="916.00" y="248.75" width="14.55" height="14.55" fill="#4332ca"/>
<rect x="930.25" y="248.75" width="14.55" height="14.55" fill="#f5e924"/>
<rect x="944.50" y="248.75" width="14.55" height="14.55" fill="#f5e825"/>
<rect x="958.75" y="248.75" width="14.55" height="14.55" fill="#4433cd"/>
<rect x="973.00" y="248.75" width="14.55" height="14.55" fill="#4434d0"/>
<rect x="987.25" y="248.75" width="14.55" height="14.55" fill="#f5e626"/>
<rect x="1001.50" y="248.75" width="14.55" height="14.55" fill="#f5e526"/>
<rect x="1015.75" y="248.75" width="14.55" height="14.55" fill="#4535d2"/>
<rect x="1030.00" y="248.75" width="14.55" height="14.55" fill="#4537d5"/>
<rect x="1044.25" y="248.75" width="14.55" height="14.55" fill="#f5e327"/>
<rect x="1058.50" y="248.75" width="14.55" height="14.55" fill="#f5e327"/>
<rect x="1072.75" y="248.75" width="14.55" height="14.55" fill="#4538d7"/>
<rect x="1087.00" y="248.75" width="14.55" height="14.55" fill="#4538d7"/>
<rect x="1101.25" y="248.75" width="14.55" height="14.55" fill="#f6e028"/>
<rect x="1115.50" y="248.75" width="14.55" height="14.55" fill="#f6e028"/>
<rect x="1129.75" y="248.75" width="14.55" height="14.55" fill="#463adb"/>
<rect x="1144.00" y="248.75" width="14.55" height="14.55" fill="#463adb"/>
<rect x="1158.25" y="248.75" width="14.55" height="14.55" fill="#f7dd2a"/>
<rect x="1172.50" y="248.75" width="14.55" height="14.55" fill="#f7dd2a"/>
<rect x="1186.75" y="248.75" width="14.55" height="14.55" fill="#463bde"/>
<rect x="859.00" y="263.00" width="14.55" height="14.55" fill="#463ddf"/>
<rect x="873.25" y="263.00" width="14.55" height="14.55" fill="#f7db2a"/>
<rect x="887.50" y="263.00" width="14.55" height="14.55" fill="#f8d92b"/>
<rect x="901.75" y="263.00" width="14.55" height="14.55" fill="#473ee1"/>
<rect x="916.00" y="263.00" width="14.55" height="14.55" fill="#473fe3"/>
<rect x="930.25" y="263.00" width="14.55" height="14.55" fill="#f9d82c"/>
<rect x="944.50" y="263.00" width="14.55" height="14.55" fill="#f9d62d"/>
<rect x="958.75" y="263.00" width="14.55" height="14.55" fill="#4741e5"/>
<rect x="973.00" y="263.00" width="14.55" height="14.55" fill="#4741e5"/>
<rect x="987.25" y="263.00" width="14.55" height="14.55" fill="#fad52e"/>
<rect x="1001.50" y="263.00" width="14.55" height="14.55" fill="#fad52e"/>
<rect x="1015.75" y="263.00" width="14.55" height="14.55" fill="#4744e8"/>
<rect x="1030.00" y="263.00" width="14.55" height="14.55" fill="#4744e8"/>
<rect x="1044.25" y="263.00" width="14.55" height="14.55" fill="#fbd22f"/>
<rect x="1058.50" y="263.00" width="14.55" height="14.55" fill="#fbd22f"/>
<rect x="1072.75" y="263.00" width="14.55" height="14.55" fill="#4746eb"/>
<rect x="1087.00" y="263.00" width="14.55" height="14.55" fill="#4746eb"/>
<rect x="1101.25" y="263.00" width="14.55" height="14.55" fill="#fcd030"/>
<rect x="1115.50" y="263.00" width="14.55" height="14.55" fill="#fcce31"/>
<rect x="1129.75" y="263.00" width="14.55" height="14.55" fill="#4848ec"/>
<rect x="1144.00" y="263.00" width="14.55" height="14.55" fill="#4849ed"/>
<rect x="1158.25" y="263.00" width="14.55" height="14.55" fill="#fdcd32"/>
<rect x="1172.50" y="263.00" width="14.55" height="14.55" fill="#fdcb32"/>
<rect x="1186.75" y="263.00" width="14.55" height="14.55" fill="#484bee"/>
<rect x="859.00" y="277.25" width="14.55" height="14.55" fill="#feca33"/>
<rect x="873.25" y="277.25" width="14.55" height="14.55" fill="#484cf0"/>
<rect x="887.50" y="277.25" width="14.55" height="14.55" fill="#484cf0"/>
<rect x="901.75" y="277.25" width="14.55" height="14.55" fill="#fec834"/>
<rect x="916.00" y="277.25" width="14.55" height="14.55" fill="#fec834"/>
<rect x="930.25" y="277.25" width="14.55" height="14.55" fill="#484ff2"/>
<rect x="944.50" y="277.25" width="14.55" height="14.55" fill="#484ff2"/>
<rect x="958.75" y="277.25" width="14.55" height="14.55" fill="#fec537"/>
<rect x="973.00" y="277.25" width="14.55" height="14.55" fill="#fec537"/>
<rect x="987.25" y="277.25" width="14.55" height="14.55" fill="#4852f4"/>
<rect x="1001.50" y="277.25" width="14.55" height="14.55" fill="#4852f4"/>
<rect x="1015.75" y="277.25" width="14.55" height="14.55" fill="#fec438"/>
<rect x="1030.00" y="277.25" width="14.55" height="14.55" fill="#fec239"/>
<rect x="1044.25" y="277.25" width="14.55" height="14.55" fill="#4853f5"/>
<rect x="1058.50" y="277.25" width="14.55" height="14.55" fill="#4854f6"/>
<rect x="1072.75" y="277.25" width="14.55" height="14.55" fill="#fec13a"/>
<rect x="1087.00" y="277.25" width="14.55" height="14.55" fill="#fec03b"/>
<rect x="1101.25" y="277.25" width="14.55" height="14.55" fill="#4756f7"/>
<rect x="1115.50" y="277.25" width="14.55" height="14.55" fill="#4757f7"/>
<rect x="1129.75" y="277.25" width="14.55" height="14.55" fill="#febe3c"/>
<rect x="1144.00" y="277.25" width="14.55" height="14.55" fill="#febe3c"/>
<rect x="1158.25" y="277.25" width="14.55" height="14.55" fill="#4759f8"/>
<rect x="1172.50" y="277.25" width="14.55" height="14.55" fill="#4759f8"/>
<rect x="1186.75" y="277.25" width="14.55" height="14.55" fill="#fcbc3d"/>
<rect x="859.00" y="291.50" width="14.55" height="14.55" fill="#fcbc3d"/>
<rect x="873.25" y="291.50" width="14.55" height="14.55" fill="#475bfa"/>
<rect x="887.50" y="291.50" width="14.55" height="14.55" fill="#475bfa"/>
<rect x="901.75" y="291.50" width="14.55" height="14.55" fill="#f9bb3d"/>
<rect x="916.00" y="291.50" width="14.55" height="14.55" fill="#f9bb3d"/>
<rect x="930.25" y="291.50" width="14.55" height="14.55" fill="#465dfa"/>
<rect x="944.50" y="291.50" width="14.55" height="14.55" fill="#465efb"/>
<rect x="958.75" y="291.50" width="14.55" height="14.55" fill="#f7ba3c"/>
<rect x="973.00" y="291.50" width="14.55" height="14.55" fill="#f5ba3a"/>
<rect x="987.25" y="291.50" width="14.55" height="14.55" fill="#4660fb"/>
<rect x="1001.50" y="291.50" width="14.55" height="14.55" fill="#4561fc"/>
<rect x="1015.75" y="291.50" width="14.55" height="14.55" fill="#f3ba38"/>
<rect x="1030.00" y="291.50" width="14.55" height="14.55" fill="#f1ba37"/>
<rect x="1044.25" y="291.50" width="14.55" height="14.55" fill="#4562fc"/>
<rect x="1058.50" y="291.50" width="14.55" height="14.55" fill="#4562fc"/>
<rect x="1072.75" y="291.50" width="14.55" height="14.55" fill="#efba35"/>
<rect x="1087.00" y="291.50" width="14.55" height="14.55" fill="#efba35"/>
<rect x="1101.25" y="291.50" width="14.55" height="14.55" fill="#4465fd"/>
<rect x="1115.50" y="291.50" width="14.55" height="14.55" fill="#4465fd"/>
<rect x="1129.75" y="291.50" width="14.55" height="14.55" fill="#eaba31"/>
<rect x="1144.00" y="291.50" width="14.55" height="14.55" fill="#eaba31"/>
<rect x="1158.25" y="291.50" width="14.55" height="14.55" fill="#4368fe"/>
<rect x="1172.50" y="291.50" width="14.55" height="14.55" fill="#4368fe"/>
<rect x="1186.75" y="291.50" width="14.55" height="14.55" fill="#e8bb2f"/>
<rect x="859.00" y="305.75" width="14.55" height="14.55" fill="#426afe"/>
<rect x="873.25" y="305.75" width="14.55" height="14.55" fill="#e5bb2d"/>
<rect x="887.50" y="305.75" width="14.55" height="14.55" fill="#e3bc2c"/>
<rect x="901.75" y="305.75" width="14.55" height="14.55" fill="#416bfe"/>
<rect x="916.00" y="305.75" width="14.55" height="14.55" fill="#406dfe"/>
<rect x="930.25" y="305.75" width="14.55" height="14.55" fill="#e0bc2b"/>
<rect x="944.50" y="305.75" width="14.55" height="14.55" fill="#debd29"/>
<rect x="958.75" y="305.75" width="14.55" height="14.55" fill="#3f6eff"/>
<rect x="973.00" y="305.75" width="14.55" height="14.55" fill="#3f6eff"/>
<rect x="987.25" y="305.75" width="14.55" height="14.55" fill="#dbbd29"/>
<rect x="1001.50" y="305.75" width="14.55" height="14.55" fill="#dbbd29"/>
<rect x="1015.75" y="305.75" width="14.55" height="14.55" fill="#3c71ff"/>
<rect x="1030.00" y="305.75" width="14.55" height="14.55" fill="#3c71ff"/>
<rect x="1044.25" y="305.75" width="14.55" height="14.55" fill="#d6be28"/>
<rect x="1058.50" y="305.75" width="14.55" height="14.55" fill="#d6be28"/>
<rect x="1072.75" y="305.75" width="14.55" height="14.55" fill="#3974fe"/>
<rect x="1087.00" y="305.75" width="14.55" height="14.55" fill="#3974fe"/>
<rect x="1101.25" y="305.75" width="14.55" height="14.55" fill="#d3bf27"/>
<rect x="1115.50" y="305.75" width="14.55" height="14.55" fill="#d0bf27"/>
<rect x="1129.75" y="305.75" width="14.55" height="14.55" fill="#3876fe"/>
<rect x="1144.00" y="305.75" width="14.55" height="14.55" fill="#3677fe"/>
<rect x="1158.25" y="305.75" width="14.55" height="14.55" fill="#cdc028"/>
<rect x="1172.50" y="305.75" width="14.55" height="14.55" fill="#cac129"/>
<rect x="1186.75" y="305.75" width="14.55" height="14.55" fill="#3579fd"/>
<rect x="859.00" y="320.00" width="14.55" height="14.55" fill="#337afd"/>
<rect x="873.25" y="320.00" width="14.55" height="14.55" fill="#c8c129"/>
<rect x="887.50" y="320.00" width="14.55" height="14.55" fill="#c5c22a"/>
<rect x="901.75" y="320.00" width="14.55" height="14.55" fill="#327cfc"/>
<rect x="916.00" y="320.00" width="14.55" height="14.55" fill="#327cfc"/>
<rect x="930.25" y="320.00" width="14.55" height="14.55" fill="#c1c32c"/>
<rect x="944.50" y="320.00" width="14.55" height="14.55" fill="#c1c32c"/>
<rect x="958.75" y="320.00" width="14.55" height="14.55" fill="#307ffb"/>
<rect x="973.00" y="320.00" width="14.55" height="14.55" fill="#307ffb"/>
<rect x="987.25" y="320.00" width="14.55" height="14.55" fill="#bbc42f"/>
<rect x="1001.50" y="320.00" width="14.55" height="14.55" fill="#bbc42f"/>
<rect x="1015.75" y="320.00" width="14.55" height="14.55" fill="#2f82fa"/>
<rect x="1030.00" y="320.00" width="14.55" height="14.55" fill="#2f82fa"/>
<rect x="1044.25" y="320.00" width="14.55" height="14.55" fill="#b8c431"/>
<rect x="1058.50" y="320.00" width="14.55" height="14.55" fill="#b5c533"/>
<rect x="1072.75" y="320.00" width="14.55" height="14.55" fill="#2e83f9"/>
<rect x="1087.00" y="320.00" width="14.55" height="14.55" fill="#2e84f8"/>
<rect x="1101.25" y="320.00" width="14.55" height="14.55" fill="#b1c635"/>
<rect x="1115.50" y="320.00" width="14.55" height="14.55" fill="#aec637"/>
<rect x="1129.75" y="320.00" width="14.55" height="14.55" fill="#2e86f8"/>
<rect x="1144.00" y="320.00" width="14.55" height="14.55" fill="#2e87f7"/>
<rect x="1158.25" y="320.00" width="14.55" height="14.55" fill="#abc739"/>
<rect x="1172.50" y="320.00" width="14.55" height="14.55" fill="#abc739"/>
<rect x="1186.75" y="320.00" width="14.55" height="14.55" fill="#2d88f6"/>
<rect x="859.00" y="334.25" width="14.55" height="14.55" fill="#a7c73c"/>
<rect x="873.25" y="334.25" width="14.55" height="14.55" fill="#2d8af5"/>
<rect x="887.50" y="334.25" width="14.55" height="14.55" fill="#2d8af5"/>
<rect x="901.75" y="334.25" width="14.55" height="14.55" fill="#a1c840"/>
<rect x="916.00" y="334.25" width="14.55" height="14.55" fill="#a1c840"/>
<rect x="930.25" y="334.25" width="14.55" height="14.55" fill="#2d8cf3"/>
<rect x="944.50" y="334.25" width="14.55" height="14.55" fill="#2d8cf3"/>
<rect x="958.75" y="334.25" width="14.55" height="14.55" fill="#9dc943"/>
<rect x="973.00" y="334.25" width="14.55" height="14.55" fill="#9ac946"/>
<rect x="987.25" y="334.25" width="14.55" height="14.55" fill="#2c8ef2"/>
<rect x="1001.50" y="334.25" width="14.55" height="14.55" fill="#2c8ff1"/>
<rect x="1015.75" y="334.25" width="14.55" height="14.55" fill="#96ca48"/>
<rect x="1030.00" y="334.25" width="14.55" height="14.55" fill="#93ca4b"/>
<rect x="1044.25" y="334.25" width="14.55" height="14.55" fill="#2b90f0"/>
<rect x="1058.50" y="334.25" width="14.55" height="14.55" fill="#2b91ef"/>
<rect x="1072.75" y="334.25" width="14.55" height="14.55" fill="#8fcb4e"/>
<rect x="1087.00" y="334.25" width="14.55" height="14.55" fill="#8fcb4e"/>
<rect x="1101.25" y="334.25" width="14.55" height="14.55" fill="#2a93ee"/>
<rect x="1115.50" y="334.25" width="14.55" height="14.55" fill="#2a93ee"/>
<rect x="1129.75" y="334.25" width="14.55" height="14.55" fill="#88cb53"/>
<rect x="1144.00" y="334.25" width="14.55" height="14.55" fill="#88cb53"/>
<rect x="1158.25" y="334.25" width="14.55" height="14.55" fill="#2895ec"/>
<rect x="1172.50" y="334.25" width="14.55" height="14.55" fill="#2895ec"/>
<rect x="1186.75" y="334.25" width="14.55" height="14.55" fill="#81cc59"/>
<rect x="859.00" y="348.50" width="14.55" height="14.55" fill="#81cc59"/>
<rect x="873.25" y="348.50" width="14.55" height="14.55" fill="#2797eb"/>
<rect x="887.50" y="348.50" width="14.55" height="14.55" fill="#2798ea"/>
<rect x="901.75" y="348.50" width="14.55" height="14.55" fill="#7dcc5b"/>
<rect x="916.00" y="348.50" width="14.55" height="14.55" fill="#79cc5e"/>
<rect x="930.25" y="348.50" width="14.55" height="14.55" fill="#2699e9"/>
<rect x="944.50" y="348.50" width="14.55" height="14.55" fill="#269ae8"/>
<rect x="958.75" y="348.50" width="14.55" height="14.55" fill="#76cc61"/>
<rect x="973.00" y="348.50" width="14.55" height="14.55" fill="#72cd64"/>
<rect x="987.25" y="348.50" width="14.55" height="14.55" fill="#259be8"/>
<rect x="1001.50" y="348.50" width="14.55" height="14.55" fill="#259be8"/>
<rect x="1015.75" y="348.50" width="14.55" height="14.55" fill="#6ecd66"/>
<rect x="1030.00" y="348.50" width="14.55" height="14.55" fill="#6ecd66"/>
<rect x="1044.25" y="348.50" width="14.55" height="14.55" fill="#249ee6"/>
<rect x="1058.50" y="348.50" width="14.55" height="14.55" fill="#249ee6"/>
<rect x="1072.75" y="348.50" width="14.55" height="14.55" fill="#67cd6c"/>
<rect x="1087.00" y="348.50" width="14.55" height="14.55" fill="#67cd6c"/>
<rect x="1101.25" y="348.50" width="14.55" height="14.55" fill="#23a0e5"/>
<rect x="1115.50" y="348.50" width="14.55" height="14.55" fill="#23a0e5"/>
<rect x="1129.75" y="348.50" width="14.55" height="14.55" fill="#64cd6f"/>
<rect x="1144.00" y="348.50" width="14.55" height="14.55" fill="#61cd72"/>
<rect x="1158.25" y="348.50" width="14.55" height="14.55" fill="#22a1e4"/>
<rect x="1172.50" y="348.50" width="14.55" height="14.55" fill="#22a2e4"/>
<rect x="1186.75" y="348.50" width="14.55" height="14.55" fill="#5ecc74"/>
<rect x="859.00" y="362.75" width="14.55" height="14.55" fill="#21a3e3"/>
<rect x="873.25" y="362.75" width="14.55" height="14.55" fill="#5acc77"/>
<rect x="887.50" y="362.75" width="14.55" height="14.55" fill="#57cc7a"/>
<rect x="901.75" y="362.75" width="14.55" height="14.55" fill="#20a5e3"/>
<rect x="916.00" y="362.75" width="14.55" height="14.55" fill="#20a5e3"/>
<rect x="930.25" y="362.75" width="14.55" height="14.55" fill="#54cc7c"/>
<rect x="944.50" y="362.75" width="14.55" height="14.55" fill="#54cc7c"/>
<rect x="958.75" y="362.75" width="14.55" height="14.55" fill="#1ea7e1"/>
<rect x="973.00" y="362.75" width="14.55" height="14.55" fill="#1ea7e1"/>
<rect x="987.25" y="362.75" width="14.55" height="14.55" fill="#4ecc81"/>
<rect x="1001.50" y="362.75" width="14.55" height="14.55" fill="#4ecc81"/>
<rect x="1015.75" y="362.75" width="14.55" height="14.55" fill="#1da9e0"/>
<rect x="1030.00" y="362.75" width="14.55" height="14.55" fill="#1da9e0"/>
<rect x="1044.25" y="362.75" width="14.55" height="14.55" fill="#4bcb84"/>
<rect x="1058.50" y="362.75" width="14.55" height="14.55" fill="#48cb86"/>
<rect x="1072.75" y="362.75" width="14.55" height="14.55" fill="#1caadf"/>
<rect x="1087.00" y="362.75" width="14.55" height="14.55" fill="#1babde"/>
<rect x="1101.25" y="362.75" width="14.55" height="14.55" fill="#45cb89"/>
<rect x="1115.50" y="362.75" width="14.55" height="14.55" fill="#42ca8b"/>
<rect x="1129.75" y="362.75" width="14.55" height="14.55" fill="#1aacdd"/>
<rect x="1144.00" y="362.75" width="14.55" height="14.55" fill="#19addb"/>
<rect x="1158.25" y="362.75" width="14.55" height="14.55" fill="#40ca8d"/>
<rect x="1172.50" y="362.75" width="14.55" height="14.55" fill="#40ca8d"/>
<rect x="1186.75" y="362.75" width="14.55" height="14.55" fill="#17aeda"/>
<rect x="859.00" y="377.00" width="14.55" height="14.55" fill="#17aeda"/>
<rect x="873.25" y="377.00" width="14.55" height="14.55" fill="#3cc992"/>
<rect x="887.50" y="377.00" width="14.55" height="14.55" fill="#3cc992"/>
<rect x="901.75" y="377.00" width="14.55" height="14.55" fill="#14b0d8"/>
<rect x="916.00" y="377.00" width="14.55" height="14.55" fill="#14b0d8"/>
<rect x="930.25" y="377.00" width="14.55" height="14.55" fill="#38c896"/>
<rect x="944.50" y="377.00" width="14.55" height="14.55" fill="#38c896"/>
<rect x="958.75" y="377.00" width="14.55" height="14.55" fill="#12b1d6"/>
<rect x="973.00" y="377.00" width="14.55" height="14.55" fill="#10b2d5"/>
<rect x="987.25" y="377.00" width="14.55" height="14.55" fill="#36c899"/>
<rect x="1001.50" y="377.00" width="14.55" height="14.55" fill="#35c79b"/>
<rect x="1015.75" y="377.00" width="14.55" height="14.55" fill="#0db3d4"/>
<rect x="1030.00" y="377.00" width="14.55" height="14.55" fill="#0bb3d2"/>
<rect x="1044.25" y="377.00" width="14.55" height="14.55" fill="#33c79d"/>
<rect x="1058.50" y="377.00" width="14.55" height="14.55" fill="#32c69f"/>
<rect x="1072.75" y="377.00" width="14.55" height="14.55" fill="#08b4d1"/>
<rect x="1087.00" y="377.00" width="14.55" height="14.55" fill="#08b4d1"/>
<rect x="1101.25" y="377.00" width="14.55" height="14.55" fill="#30c5a1"/>
<rect x="1115.50" y="377.00" width="14.55" height="14.55" fill="#30c5a1"/>
<rect x="1129.75" y="377.00" width="14.55" height="14.55" fill="#05b6ce"/>
<rect x="1144.00" y="377.00" width="14.55" height="14.55" fill="#05b6ce"/>
<rect x="1158.25" y="377.00" width="14.55" height="14.55" fill="#2ec4a4"/>
<rect x="1172.50" y="377.00" width="14.55" height="14.55" fill="#2ec4a4"/>
<rect x="1186.75" y="377.00" width="14.55" height="14.55" fill="#02b7ca"/>
<rect x="859.00" y="391.25" width="14.55" height="14.55" fill="#2cc4a6"/>
<rect x="873.25" y="391.25" width="14.55" height="14.55" fill="#02b7ca"/>
<rect x="887.50" y="391.25" width="14.55" height="14.55" fill="#01b8c9"/>
<rect x="901.75" y="391.25" width="14.55" height="14.55" fill="#2bc3a8"/>
<rect x="916.00" y="391.25" width="14.55" height="14.55" fill="#29c3aa"/>
<rect x="930.25" y="391.25" width="14.55" height="14.55" fill="#01b9c7"/>
<rect x="944.50" y="391.25" width="14.55" height="14.55" fill="#01b9c6"/>
<rect x="958.75" y="391.25" width="14.55" height="14.55" fill="#27c2ac"/>
<rect x="973.00" y="391.25" width="14.55" height="14.55" fill="#25c2ae"/>
<rect x="987.25" y="391.25" width="14.55" height="14.55" fill="#02bac4"/>
<rect x="1001.50" y="391.25" width="14.55" height="14.55" fill="#02bac4"/>
<rect x="1015.75" y="391.25" width="14.55" height="14.55" fill="#22c1af"/>
<rect x="1030.00" y="391.25" width="14.55" height="14.55" fill="#22c1af"/>
<rect x="1044.25" y="391.25" width="14.55" height="14.55" fill="#05bbc1"/>
<rect x="1058.50" y="391.25" width="14.55" height="14.55" fill="#05bbc1"/>
<rect x="1072.75" y="391.25" width="14.55" height="14.55" fill="#1dc0b3"/>
<rect x="1087.00" y="391.25" width="14.55" height="14.55" fill="#1dc0b3"/>
<rect x="1101.25" y="391.25" width="14.55" height="14.55" fill="#0abdbd"/>
<rect x="1115.50" y="391.25" width="14.55" height="14.55" fill="#0abdbd"/>
<rect x="1129.75" y="391.25" width="14.55" height="14.55" fill="#1ac0b5"/>
<rect x="1144.00" y="391.25" width="14.55" height="14.55" fill="#17bfb6"/>
<rect x="1158.25" y="391.25" width="14.55" height="14.55" fill="#0dbdbc"/>
<rect x="1172.50" y="391.25" width="14.55" height="14.55" fill="#10beba"/>
<rect x="1186.75" y="391.25" width="14.55" height="14.55" fill="#13beb8"/>
<rect x="859.00" y="405.50" width="14.55" height="14.55" fill="#10beba"/>
<rect x="873.25" y="405.50" width="14.55" height="14.55" fill="#13beb8"/>
<rect x="887.50" y="405.50" width="14.55" height="14.55" fill="#17bfb6"/>
<rect x="901.75" y="405.50" width="14.55" height="14.55" fill="#0dbdbc"/>
<rect x="916.00" y="405.50" width="14.55" height="14.55" fill="#0abdbd"/>
<rect x="930.25" y="405.50" width="14.55" height="14.55" fill="#1ac0b5"/>
<rect x="944.50" y="405.50" width="14.55" height="14.55" fill="#1ac0b5"/>
<rect x="958.75" y="405.50" width="14.55" height="14.55" fill="#08bcbf"/>
<rect x="973.00" y="405.50" width="14.55" height="14.55" fill="#08bcbf"/>
<rect x="987.25" y="405.50" width="14.55" height="14.55" fill="#20c1b1"/>
<rect x="1001.50" y="405.50" width="14.55" height="14.55" fill="#20c1b1"/>
<rect x="1015.75" y="405.50" width="14.55" height="14.55" fill="#03bbc2"/>
<rect x="1030.00" y="405.50" width="14.55" height="14.55" fill="#03bbc2"/>
<rect x="1044.25" y="405.50" width="14.55" height="14.55" fill="#25c2ae"/>
<rect x="1058.50" y="405.50" width="14.55" height="14.55" fill="#25c2ae"/>
<rect x="1072.75" y="405.50" width="14.55" height="14.55" fill="#02bac4"/>
<rect x="1087.00" y="405.50" width="14.55" height="14.55" fill="#01b9c6"/>
<rect x="1101.25" y="405.50" width="14.55" height="14.55" fill="#27c2ac"/>
<rect x="1115.50" y="405.50" width="14.55" height="14.55" fill="#29c3aa"/>
<rect x="1129.75" y="405.50" width="14.55" height="14.55" fill="#01b9c7"/>
<rect x="1144.00" y="405.50" width="14.55" height="14.55" fill="#01b8c9"/>
<rect x="1158.25" y="405.50" width="14.55" height="14.55" fill="#2bc3a8"/>
<rect x="1172.50" y="405.50" width="14.55" height="14.55" fill="#2cc4a6"/>
<rect x="1186.75" y="405.50" width="14.55" height="14.55" fill="#02b7ca"/>
<rect x="859.00" y="419.75" width="14.55" height="14.55" fill="#2cc4a6"/>
<rect x="873.25" y="419.75" width="14.55" height="14.55" fill="#03b7cc"/>
<rect x="887.50" y="419.75" width="14.55" height="14.55" fill="#03b7cc"/>
<rect x="901.75" y="419.75" width="14.55" height="14.55" fill="#2fc5a3"/>
<rect x="916.00" y="419.75" width="14.55" height="14.55" fill="#2fc5a3"/>
<rect x="930.25" y="419.75" width="14.55" height="14.55" fill="#06b5cf"/>
<rect x="944.50" y="419.75" width="14.55" height="14.55" fill="#06b5cf"/>
<rect x="958.75" y="419.75" width="14.55" height="14.55" fill="#32c69f"/>
<rect x="973.00" y="419.75" width="14.55" height="14.55" fill="#32c69f"/>
<rect x="987.25" y="419.75" width="14.55" height="14.55" fill="#08b4d1"/>
<rect x="1001.50" y="419.75" width="14.55" height="14.55" fill="#0bb3d2"/>
<rect x="1015.75" y="419.75" width="14.55" height="14.55" fill="#33c79d"/>
<rect x="1030.00" y="419.75" width="14.55" height="14.55" fill="#35c79b"/>
<rect x="1044.25" y="419.75" width="14.55" height="14.55" fill="#0db3d4"/>
<rect x="1058.50" y="419.75" width="14.55" height="14.55" fill="#10b2d5"/>
<rect x="1072.75" y="419.75" width="14.55" height="14.55" fill="#36c899"/>
<rect x="1087.00" y="419.75" width="14.55" height="14.55" fill="#38c896"/>
<rect x="1101.25" y="419.75" width="14.55" height="14.55" fill="#12b1d6"/>
<rect x="1115.50" y="419.75" width="14.55" height="14.55" fill="#12b1d6"/>
<rect x="1129.75" y="419.75" width="14.55" height="14.55" fill="#3ac994"/>
<rect x="1144.00" y="419.75" width="14.55" height="14.55" fill="#3ac994"/>
<rect x="1158.25" y="419.75" width="14.55" height="14.55" fill="#15afd9"/>
<rect x="1172.50" y="419.75" width="14.55" height="14.55" fill="#15afd9"/>
<rect x="1186.75" y="419.75" width="14.55" height="14.55" fill="#3eca90"/>
<rect x="859.00" y="434.00" width="14.55" height="14.55" fill="#3eca90"/>
<rect x="873.25" y="434.00" width="14.55" height="14.55" fill="#19addb"/>
<rect x="887.50" y="434.00" width="14.55" height="14.55" fill="#19addb"/>
<rect x="901.75" y="434.00" width="14.55" height="14.55" fill="#40ca8d"/>
<rect x="916.00" y="434.00" width="14.55" height="14.55" fill="#42ca8b"/>
<rect x="930.25" y="434.00" width="14.55" height="14.55" fill="#1aacdd"/>
<rect x="944.50" y="434.00" width="14.55" height="14.55" fill="#1babde"/>
<rect x="958.75" y="434.00" width="14.55" height="14.55" fill="#45cb89"/>
<rect x="973.00" y="434.00" width="14.55" height="14.55" fill="#48cb86"/>
<rect x="987.25" y="434.00" width="14.55" height="14.55" fill="#1caadf"/>
<rect x="1001.50" y="434.00" width="14.55" height="14.55" fill="#1da9e0"/>
<rect x="1015.75" y="434.00" width="14.55" height="14.55" fill="#4bcb84"/>
<rect x="1030.00" y="434.00" width="14.55" height="14.55" fill="#4bcb84"/>
<rect x="1044.25" y="434.00" width="14.55" height="14.55" fill="#1da8e0"/>
<rect x="1058.50" y="434.00" width="14.55" height="14.55" fill="#1da8e0"/>
<rect x="1072.75" y="434.00" width="14.55" height="14.55" fill="#51cc7f"/>
<rect x="1087.00" y="434.00" width="14.55" height="14.55" fill="#51cc7f"/>
<rect x="1101.25" y="434.00" width="14.55" height="14.55" fill="#1fa6e2"/>
<rect x="1115.50" y="434.00" width="14.55" height="14.55" fill="#1fa6e2"/>
<rect x="1129.75" y="434.00" width="14.55" height="14.55" fill="#57cc7a"/>
<rect x="1144.00" y="434.00" width="14.55" height="14.55" fill="#57cc7a"/>
<rect x="1158.25" y="434.00" width="14.55" height="14.55" fill="#20a5e3"/>
<rect x="1172.50" y="434.00" width="14.55" height="14.55" fill="#21a3e3"/>
<rect x="1186.75" y="434.00" width="14.55" height="14.55" fill="#5acc77"/>
<rect x="859.00" y="448.25" width="14.55" height="14.55" fill="#22a2e4"/>
<rect x="873.25" y="448.25" width="14.55" height="14.55" fill="#5ecc74"/>
<rect x="887.50" y="448.25" width="14.55" height="14.55" fill="#61cd72"/>
<rect x="901.75" y="448.25" width="14.55" height="14.55" fill="#22a1e4"/>
<rect x="916.00" y="448.25" width="14.55" height="14.55" fill="#23a0e5"/>
<rect x="930.25" y="448.25" width="14.55" height="14.55" fill="#64cd6f"/>
<rect x="944.50" y="448.25" width="14.55" height="14.55" fill="#64cd6f"/>
<rect x="958.75" y="448.25" width="14.55" height="14.55" fill="#249fe6"/>
<rect x="973.00" y="448.25" width="14.55" height="14.55" fill="#249fe6"/>
<rect x="987.25" y="448.25" width="14.55" height="14.55" fill="#6bcd69"/>
<rect x="1001.50" y="448.25" width="14.55" height="14.55" fill="#6bcd69"/>
<rect x="1015.75" y="448.25" width="14.55" height="14.55" fill="#259ce7"/>
<rect x="1030.00" y="448.25" width="14.55" height="14.55" fill="#259ce7"/>
<rect x="1044.25" y="448.25" width="14.55" height="14.55" fill="#72cd64"/>
<rect x="1058.50" y="448.25" width="14.55" height="14.55" fill="#72cd64"/>
<rect x="1072.75" y="448.25" width="14.55" height="14.55" fill="#259be8"/>
<rect x="1087.00" y="448.25" width="14.55" height="14.55" fill="#269ae8"/>
<rect x="1101.25" y="448.25" width="14.55" height="14.55" fill="#76cc61"/>
<rect x="1115.50" y="448.25" width="14.55" height="14.55" fill="#79cc5e"/>
<rect x="1129.75" y="448.25" width="14.55" height="14.55" fill="#2699e9"/>
<rect x="1144.00" y="448.25" width="14.55" height="14.55" fill="#2798ea"/>
<rect x="1158.25" y="448.25" width="14.55" height="14.55" fill="#7dcc5b"/>
<rect x="1172.50" y="448.25" width="14.55" height="14.55" fill="#81cc59"/>
<rect x="1186.75" y="448.25" width="14.55" height="14.55" fill="#2797eb"/>
<rect x="859.00" y="462.50" width="14.55" height="14.55" fill="#2797eb"/>
<rect x="873.25" y="462.50" width="14.55" height="14.55" fill="#84cc56"/>
<rect x="887.50" y="462.50" width="14.55" height="14.55" fill="#84cc56"/>
<rect x="901.75" y="462.50" width="14.55" height="14.55" fill="#2994ed"/>
<rect x="916.00" y="462.50" width="14.55" height="14.55" fill="#2994ed"/>
<rect x="930.25" y="462.50" width="14.55" height="14.55" fill="#8bcb51"/>
<rect x="944.50" y="462.50" width="14.55" height="14.55" fill="#8bcb51"/>
<rect x="958.75" y="462.50" width="14.55" height="14.55" fill="#2b91ef"/>
<rect x="973.00" y="462.50" width="14.55" height="14.55" fill="#2b91ef"/>
<rect x="987.25" y="462.50" width="14.55" height="14.55" fill="#8fcb4e"/>
<rect x="1001.50" y="462.50" width="14.55" height="14.55" fill="#93ca4b"/>
<rect x="1015.75" y="462.50" width="14.55" height="14.55" fill="#2b90f0"/>
<rect x="1030.00" y="462.50" width="14.55" height="14.55" fill="#2c8ff1"/>
<rect x="1044.25" y="462.50" width="14.55" height="14.55" fill="#96ca48"/>
<rect x="1058.50" y="462.50" width="14.55" height="14.55" fill="#9ac946"/>
<rect x="1072.75" y="462.50" width="14.55" height="14.55" fill="#2c8ef2"/>
<rect x="1087.00" y="462.50" width="14.55" height="14.55" fill="#2d8cf3"/>
<rect x="1101.25" y="462.50" width="14.55" height="14.55" fill="#9dc943"/>
<rect x="1115.50" y="462.50" width="14.55" height="14.55" fill="#9dc943"/>
<rect x="1129.75" y="462.50" width="14.55" height="14.55" fill="#2d8bf4"/>
<rect x="1144.00" y="462.50" width="14.55" height="14.55" fill="#2d8bf4"/>
<rect x="1158.25" y="462.50" width="14.55" height="14.55" fill="#a4c83e"/>
<rect x="1172.50" y="462.50" width="14.55" height="14.55" fill="#a4c83e"/>
<rect x="1186.75" y="462.50" width="14.55" height="14.55" fill="#2d88f6"/>
<rect x="859.00" y="476.75" width="14.55" height="14.55" fill="#a7c73c"/>
<rect x="873.25" y="476.75" width="14.55" height="14.55" fill="#2e87f7"/>
<rect x="887.50" y="476.75" width="14.55" height="14.55" fill="#2e87f7"/>
<rect x="901.75" y="476.75" width="14.55" height="14.55" fill="#abc739"/>
<rect x="916.00" y="476.75" width="14.55" height="14.55" fill="#aec637"/>
<rect x="930.25" y="476.75" width="14.55" height="14.55" fill="#2e86f8"/>
<rect x="944.50" y="476.75" width="14.55" height="14.55" fill="#2e84f8"/>
<rect x="958.75" y="476.75" width="14.55" height="14.55" fill="#b1c635"/>
<rect x="973.00" y="476.75" width="14.55" height="14.55" fill="#b5c533"/>
<rect x="987.25" y="476.75" width="14.55" height="14.55" fill="#2e83f9"/>
<rect x="1001.50" y="476.75" width="14.55" height="14.55" fill="#2f82fa"/>
<rect x="1015.75" y="476.75" width="14.55" height="14.55" fill="#b8c431"/>
<rect x="1030.00" y="476.75" width="14.55" height="14.55" fill="#b8c431"/>
<rect x="1044.25" y="476.75" width="14.55" height="14.55" fill="#2f80fa"/>
<rect x="1058.50" y="476.75" width="14.55" height="14.55" fill="#2f80fa"/>
<rect x="1072.75" y="476.75" width="14.55" height="14.55" fill="#bec32e"/>
<rect x="1087.00" y="476.75" width="14.55" height="14.55" fill="#bec32e"/>
<rect x="1101.25" y="476.75" width="14.55" height="14.55" fill="#317dfc"/>
<rect x="1115.50" y="476.75" width="14.55" height="14.55" fill="#317dfc"/>
<rect x="1129.75" y="476.75" width="14.55" height="14.55" fill="#c5c22a"/>
<rect x="1144.00" y="476.75" width="14.55" height="14.55" fill="#c5c22a"/>
<rect x="1158.25" y="476.75" width="14.55" height="14.55" fill="#327cfc"/>
<rect x="1172.50" y="476.75" width="14.55" height="14.55" fill="#337afd"/>
<rect x="1186.75" y="476.75" width="14.55" height="14.55" fill="#c8c129"/>
<rect x="859.00" y="491.00" width="14.55" height="14.55" fill="#cac129"/>
<rect x="873.25" y="491.00" width="14.55" height="14.55" fill="#3579fd"/>
<rect x="887.50" y="491.00" width="14.55" height="14.55" fill="#3677fe"/>
<rect x="901.75" y="491.00" width="14.55" height="14.55" fill="#cdc028"/>
<rect x="916.00" y="491.00" width="14.55" height="14.55" fill="#d0bf27"/>
<rect x="930.25" y="491.00" width="14.55" height="14.55" fill="#3876fe"/>
<rect x="944.50" y="491.00" width="14.55" height="14.55" fill="#3974fe"/>
<rect x="958.75" y="491.00" width="14.55" height="14.55" fill="#d3bf27"/>
<rect x="973.00" y="491.00" width="14.55" height="14.55" fill="#d3bf27"/>
<rect x="987.25" y="491.00" width="14.55" height="14.55" fill="#3b73fe"/>
<rect x="1001.50" y="491.00" width="14.55" height="14.55" fill="#3b73fe"/>
<rect x="1015.75" y="491.00" width="14.55" height="14.55" fill="#d9be28"/>
<rect x="1030.00" y="491.00" width="14.55" height="14.55" fill="#d9be28"/>
<rect x="1044.25" y="491.00" width="14.55" height="14.55" fill="#3e70ff"/>
<rect x="1058.50" y="491.00" width="14.55" height="14.55" fill="#3e70ff"/>
<rect x="1072.75" y="491.00" width="14.55" height="14.55" fill="#debd29"/>
<rect x="1087.00" y="491.00" width="14.55" height="14.55" fill="#debd29"/>
<rect x="1101.25" y="491.00" width="14.55" height="14.55" fill="#3f6eff"/>
<rect x="1115.50" y="491.00" width="14.55" height="14.55" fill="#406dfe"/>
<rect x="1129.75" y="491.00" width="14.55" height="14.55" fill="#e0bc2b"/>
<rect x="1144.00" y="491.00" width="14.55" height="14.55" fill="#e3bc2c"/>
<rect x="1158.25" y="491.00" width="14.55" height="14.55" fill="#416bfe"/>
<rect x="1172.50" y="491.00" width="14.55" height="14.55" fill="#426afe"/>
<rect x="1186.75" y="491.00" width="14.55" height="14.55" fill="#e5bb2d"/>
<rect x="859.00" y="505.25" width="14.55" height="14.55" fill="#4368fe"/>
<rect x="873.25" y="505.25" width="14.55" height="14.55" fill="#e8bb2f"/>
<rect x="887.50" y="505.25" width="14.55" height="14.55" fill="#e8bb2f"/>
<rect x="901.75" y="505.25" width="14.55" height="14.55" fill="#4367fd"/>
<rect x="916.00" y="505.25" width="14.55" height="14.55" fill="#4367fd"/>
<rect x="930.25" y="505.25" width="14.55" height="14.55" fill="#ecba33"/>
<rect x="944.50" y="505.25" width="14.55" height="14.55" fill="#ecba33"/>
<rect x="958.75" y="505.25" width="14.55" height="14.55" fill="#4564fd"/>
<rect x="973.00" y="505.25" width="14.55" height="14.55" fill="#4564fd"/>
<rect x="987.25" y="505.25" width="14.55" height="14.55" fill="#f1ba37"/>
<rect x="1001.50" y="505.25" width="14.55" height="14.55" fill="#f1ba37"/>
<rect x="1015.75" y="505.25" width="14.55" height="14.55" fill="#4562fc"/>
<rect x="1030.00" y="505.25" width="14.55" height="14.55" fill="#4561fc"/>
<rect x="1044.25" y="505.25" width="14.55" height="14.55" fill="#f3ba38"/>
<rect x="1058.50" y="505.25" width="14.55" height="14.55" fill="#f5ba3a"/>
<rect x="1072.75" y="505.25" width="14.55" height="14.55" fill="#4660fb"/>
<rect x="1087.00" y="505.25" width="14.55" height="14.55" fill="#465efb"/>
<rect x="1101.25" y="505.25" width="14.55" height="14.55" fill="#f7ba3c"/>
<rect x="1115.50" y="505.25" width="14.55" height="14.55" fill="#f9bb3d"/>
<rect x="1129.75" y="505.25" width="14.55" height="14.55" fill="#465dfa"/>
<rect x="1144.00" y="505.25" width="14.55" height="14.55" fill="#465dfa"/>
<rect x="1158.25" y="505.25" width="14.55" height="14.55" fill="#fabb3d"/>
<rect x="1172.50" y="505.25" width="14.55" height="14.55" fill="#fabb3d"/>
<rect x="1186.75" y="505.25" width="14.55" height="14.55" fill="#475af9"/>
<rect x="859.00" y="519.50" width="14.55" height="14.55" fill="#475af9"/>
<rect x="873.25" y="519.50" width="14.55" height="14.55" fill="#fdbd3d"/>
<rect x="887.50" y="519.50" width="14.55" height="14.55" fill="#fdbd3d"/>
<rect x="901.75" y="519.50" width="14.55" height="14.55" fill="#4757f7"/>
<rect x="916.00" y="519.50" width="14.55" height="14.55" fill="#4757f7"/>
<rect x="930.25" y="519.50" width="14.55" height="14.55" fill="#febe3c"/>
<rect x="944.50" y="519.50" width="14.55" height="14.55" fill="#fec03b"/>
<rect x="958.75" y="519.50" width="14.55" height="14.55" fill="#4756f7"/>
<rect x="973.00" y="519.50" width="14.55" height="14.55" fill="#4854f6"/>
<rect x="987.25" y="519.50" width="14.55" height="14.55" fill="#fec13a"/>
<rect x="1001.50" y="519.50" width="14.55" height="14.55" fill="#fec239"/>
<rect x="1015.75" y="519.50" width="14.55" height="14.55" fill="#4853f5"/>
<rect x="1030.00" y="519.50" width="14.55" height="14.55" fill="#4852f4"/>
<rect x="1044.25" y="519.50" width="14.55" height="14.55" fill="#fec438"/>
<rect x="1058.50" y="519.50" width="14.55" height="14.55" fill="#fec438"/>
<rect x="1072.75" y="519.50" width="14.55" height="14.55" fill="#4850f3"/>
<rect x="1087.00" y="519.50" width="14.55" height="14.55" fill="#4850f3"/>
<rect x="1101.25" y="519.50" width="14.55" height="14.55" fill="#fec735"/>
<rect x="1115.50" y="519.50" width="14.55" height="14.55" fill="#fec735"/>
<rect x="1129.75" y="519.50" width="14.55" height="14.55" fill="#484ef1"/>
<rect x="1144.00" y="519.50" width="14.55" height="14.55" fill="#484ef1"/>
<rect x="1158.25" y="519.50" width="14.55" height="14.55" fill="#feca33"/>
<rect x="1172.50" y="519.50" width="14.55" height="14.55" fill="#feca33"/>
<rect x="1186.75" y="519.50" width="14.55" height="14.55" fill="#484cf0"/>
<rect x="859.00" y="533.75" width="14.55" height="14.55" fill="#fdcb32"/>
<rect x="873.25" y="533.75" width="14.55" height="14.55" fill="#484bee"/>
<rect x="887.50" y="533.75" width="14.55" height="14.55" fill="#4849ed"/>
<rect x="901.75" y="533.75" width="14.55" height="14.55" fill="#fdcd32"/>
<rect x="916.00" y="533.75" width="14.55" height="14.55" fill="#fcce31"/>
<rect x="930.25" y="533.75" width="14.55" height="14.55" fill="#4848ec"/>
<rect x="944.50" y="533.75" width="14.55" height="14.55" fill="#4746eb"/>
<rect x="958.75" y="533.75" width="14.55" height="14.55" fill="#fcd030"/>
<rect x="973.00" y="533.75" width="14.55" height="14.55" fill="#fcd030"/>
<rect x="987.25" y="533.75" width="14.55" height="14.55" fill="#4745e9"/>
<rect x="1001.50" y="533.75" width="14.55" height="14.55" fill="#4745e9"/>
<rect x="1015.75" y="533.75" width="14.55" height="14.55" fill="#fbd32e"/>
<rect x="1030.00" y="533.75" width="14.55" height="14.55" fill="#fbd32e"/>
<rect x="1044.25" y="533.75" width="14.55" height="14.55" fill="#4742e6"/>
<rect x="1058.50" y="533.75" width="14.55" height="14.55" fill="#4742e6"/>
<rect x="1072.75" y="533.75" width="14.55" height="14.55" fill="#f9d62d"/>
<rect x="1087.00" y="533.75" width="14.55" height="14.55" fill="#f9d62d"/>
<rect x="1101.25" y="533.75" width="14.55" height="14.55" fill="#4741e5"/>
<rect x="1115.50" y="533.75" width="14.55" height="14.55" fill="#473fe3"/>
<rect x="1129.75" y="533.75" width="14.55" height="14.55" fill="#f9d82c"/>
<rect x="1144.00" y="533.75" width="14.55" height="14.55" fill="#f8d92b"/>
<rect x="1158.25" y="533.75" width="14.55" height="14.55" fill="#473ee1"/>
<rect x="1172.50" y="533.75" width="14.55" height="14.55" fill="#463ddf"/>
<rect x="1186.75" y="533.75" width="14.55" height="14.55" fill="#f7db2a"/>
<rect x="859.00" y="548.00" width="14.55" height="14.55" fill="#f7dd2a"/>
<rect x="873.25" y="548.00" width="14.55" height="14.55" fill="#463bde"/>
<rect x="887.50" y="548.00" width="14.55" height="14.55" fill="#463bde"/>
<rect x="901.75" y="548.00" width="14.55" height="14.55" fill="#f6de29"/>
<rect x="916.00" y="548.00" width="14.55" height="14.55" fill="#f6de29"/>
<rect x="930.25" y="548.00" width="14.55" height="14.55" fill="#4639d9"/>
<rect x="944.50" y="548.00" width="14.55" height="14.55" fill="#4639d9"/>
<rect x="958.75" y="548.00" width="14.55" height="14.55" fill="#f5e128"/>
<rect x="973.00" y="548.00" width="14.55" height="14.55" fill="#f5e128"/>
<rect x="987.25" y="548.00" width="14.55" height="14.55" fill="#4537d5"/>
<rect x="1001.50" y="548.00" width="14.55" height="14.55" fill="#4537d5"/>
<rect x="1015.75" y="548.00" width="14.55" height="14.55" fill="#f5e327"/>
<rect x="1030.00" y="548.00" width="14.55" height="14.55" fill="#f5e526"/>
<rect x="1044.25" y="548.00" width="14.55" height="14.55" fill="#4535d2"/>
<rect x="1058.50" y="548.00" width="14.55" height="14.55" fill="#4434d0"/>
<rect x="1072.75" y="548.00" width="14.55" height="14.55" fill="#f5e626"/>
<rect x="1087.00" y="548.00" width="14.55" height="14.55" fill="#f5e825"/>
<rect x="1101.25" y="548.00" width="14.55" height="14.55" fill="#4433cd"/>
<rect x="1115.50" y="548.00" width="14.55" height="14.55" fill="#4332ca"/>
<rect x="1129.75" y="548.00" width="14.55" height="14.55" fill="#f5e924"/>
<rect x="1144.00" y="548.00" width="14.55" height="14.55" fill="#f5e924"/>
<rect x="1158.25" y="548.00" width="14.55" height="14.55" fill="#4331c8"/>
<rect x="1172.50" y="548.00" width="14.55" height="14.55" fill="#4331c8"/>
<rect x="1186.75" y="548.00" width="14.55" height="14.55" fill="#f5ec22"/>
<rect x="859.00" y="562.25" width="14.55" height="14.55" fill="#4330c5"/>
<rect x="873.25" y="562.25" width="14.55" height="14.55" fill="#f5ee21"/>
<rect x="887.50" y="562.25" width="14.55" height="14.55" fill="#f5ee21"/>
<rect x="901.75" y="562.25" width="14.55" height="14.55" fill="#422ebf"/>
<rect x="916.00" y="562.25" width="14.55" height="14.55" fill="#422ebf"/>
<rect x="930.25" y="562.25" width="14.55" height="14.55" fill="#f6ef20"/>
<rect x="944.50" y="562.25" width="14.55" height="14.55" fill="#f6f11f"/>
<rect x="958.75" y="562.25" width="14.55" height="14.55" fill="#412dbd"/>
<rect x="973.00" y="562.25" width="14.55" height="14.55" fill="#412cba"/>
<rect x="987.25" y="562.25" width="14.55" height="14.55" fill="#f6f21e"/>
<rect x="1001.50" y="562.25" width="14.55" height="14.55" fill="#f7f41c"/>
<rect x="1015.75" y="562.25" width="14.55" height="14.55" fill="#402bb7"/>
<rect x="1030.00" y="562.25" width="14.55" height="14.55" fill="#402ab4"/>
<rect x="1044.25" y="562.25" width="14.55" height="14.55" fill="#f7f51b"/>
<rect x="1058.50" y="562.25" width="14.55" height="14.55" fill="#f7f51b"/>
<rect x="1072.75" y="562.25" width="14.55" height="14.55" fill="#3f29b1"/>
<rect x="1087.00" y="562.25" width="14.55" height="14.55" fill="#3f29b1"/>
<rect x="1101.25" y="562.25" width="14.55" height="14.55" fill="#f8f818"/>
<rect x="1115.50" y="562.25" width="14.55" height="14.55" fill="#f8f818"/>
<rect x="1129.75" y="562.25" width="14.55" height="14.55" fill="#3e27ab"/>
<rect x="1144.00" y="562.25" width="14.55" height="14.55" fill="#3e27ab"/>
<rect x="1158.25" y="562.25" width="14.55" height="14.55" fill="#f9fb15"/>
<rect x="1172.50" y="562.25" width="14.55" height="14.55" fill="#f9fb15"/>
<rect x="1186.75" y="562.25" width="14.55" height="14.55" fill="#3e26a8"/>
</g>
<path d="M851.5 576.5v-4.3M851.5 234.5v4.3M923.5 576.5v-4.3M923.5 234.5v4.3M994.5 576.5v-4.3M994.5 234.5v4.3M1065.5 576.5v-4.3M1065.5 234.5v4.3M1136.5 576.5v-4.3M1136.5 234.5v4.3M1208.5 576.5v-4.3M1208.5 234.5v4.3M813.5 298.5h4.3M1246.5 298.5h-4.3M813.5 369.5h4.3M1246.5 369.5h-4.3M813.5 441.5h4.3M1246.5 441.5h-4.3M813.5 512.5h4.3M1246.5 512.5h-4.3" stroke="#262626" stroke-width="1" fill="none"/>
<rect x="813.5" y="234.5" width="433.0" height="342.0" fill="none" stroke="#262626" stroke-width="1"/>
<g font-family='"Liberation Sans", sans-serif' font-size="13.33" fill="#262626">
<text x="851.9" y="596" text-anchor="middle">0</text>
<text x="923.1" y="596" text-anchor="middle">5</text>
<text x="994.4" y="596" text-anchor="middle">10</text>
<text x="1065.6" y="596" text-anchor="middle">15</text>
<text x="1136.9" y="596" text-anchor="middle">20</text>
<text x="1208.1" y="596" text-anchor="middle">25</text>
<text x="807.5" y="304.5" text-anchor="end">5</text>
<text x="807.5" y="375.8" text-anchor="end">10</text>
<text x="807.5" y="447.0" text-anchor="end">15</text>
<text x="807.5" y="518.3" text-anchor="end">20</text>
</g>
<text x="1030.3" y="228.1" text-anchor="middle" font-family='"Liberation Sans", sans-serif' font-size="15.6" font-weight="bold" fill="#000" textLength="16" lengthAdjust="spacingAndGlyphs">24</text>
</svg>
</body></html>
